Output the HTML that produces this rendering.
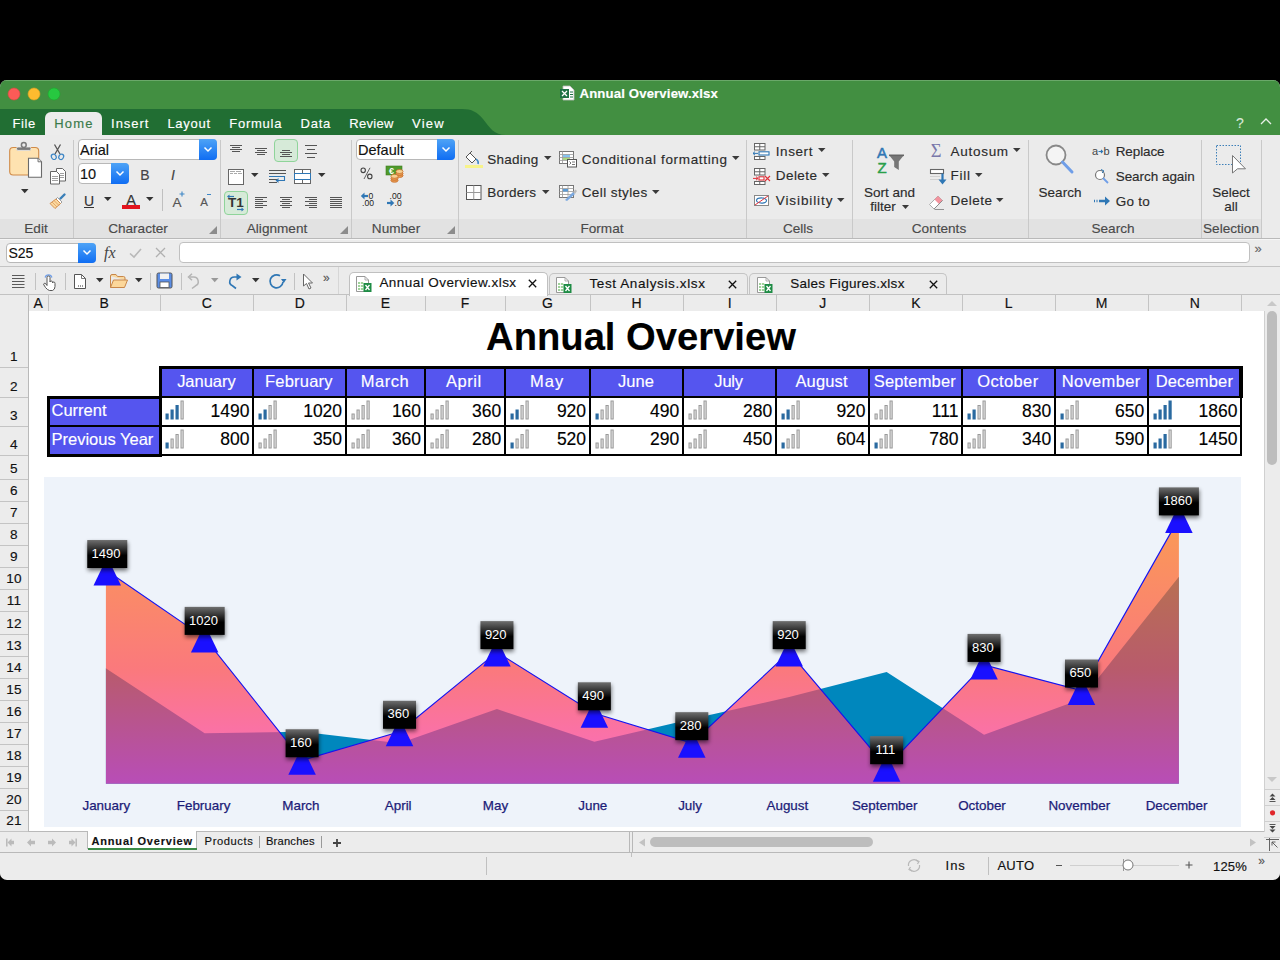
<!DOCTYPE html>
<html><head><meta charset="utf-8"><style>
html,body{margin:0;padding:0;}
body{width:1280px;height:960px;background:#000;position:relative;overflow:hidden;font-family:"Liberation Sans", sans-serif;}
.a{position:absolute;}
.t{position:absolute;white-space:nowrap;line-height:1;font-family:"Liberation Sans", sans-serif;-webkit-text-stroke:0.15px currentColor;}
svg.a{overflow:visible;}
</style></head><body>
<div class="a" style="left:0px;top:80px;width:1280px;height:800px;background:#ececec;border-radius:7px 7px 7px 7px;"></div>
<div class="a" style="left:0px;top:80px;width:1280px;height:55px;background:#428f41;border-radius:7px 7px 0 0;"></div>
<div class="a" style="left:6px;top:80px;width:1268px;height:1px;background:#6aa869;"></div>
<svg class="a" style="left:0px;top:109px;" width="510" height="26" viewBox="0 0 510 26"><path d="M0 0 H462 C472 0 477 3 483 10 C490 19 494 26 506 26 H0 Z" fill="#216e33"/></svg>
<svg class="a" style="left:7px;top:87px;" width="14" height="14" viewBox="0 0 14 14"><circle cx="7" cy="7" r="6" fill="#fc5b57" stroke="#de4640" stroke-width="0.6"/></svg>
<svg class="a" style="left:27px;top:87px;" width="14" height="14" viewBox="0 0 14 14"><circle cx="7" cy="7" r="6" fill="#fdbb2f" stroke="#df9d20" stroke-width="0.6"/></svg>
<svg class="a" style="left:47px;top:87px;" width="14" height="14" viewBox="0 0 14 14"><circle cx="7" cy="7" r="6" fill="#27c840" stroke="#1aab2b" stroke-width="0.6"/></svg>
<svg class="a" style="left:559px;top:85px;" width="16" height="16" viewBox="0 0 16 16"><path d="M4 1 H11 L15 5 V15 H4 Z" fill="#fff" stroke="#bbb" stroke-width="0.8"/><rect x="1" y="4" width="9" height="9" fill="#1d7044"/><path d="M3 6 L8 11 M8 6 L3 11" stroke="#fff" stroke-width="1.3"/><path d="M11 7 H14 M11 9.5 H14 M11 12 H14" stroke="#1d7044" stroke-width="1"/></svg>
<div class="t" style="left:579.5px;top:86.73px;font-size:13.2px;color:#fff;font-weight:bold;letter-spacing:0.133px;">Annual Overview.xlsx</div>
<div class="a" style="left:45px;top:112px;width:57px;height:24px;background:#ececec;border-radius:6px 6px 0 0;"></div>
<div class="t" style="left:12.5px;top:116.8px;font-size:13px;color:#ffffff;font-weight:normal;letter-spacing:0.585px;">File</div>
<div class="t" style="left:54.3px;top:116.8px;font-size:13px;color:#3a7a4a;font-weight:normal;letter-spacing:1.141px;">Home</div>
<div class="t" style="left:111.1px;top:116.8px;font-size:13px;color:#ffffff;font-weight:normal;letter-spacing:0.937px;">Insert</div>
<div class="t" style="left:167.4px;top:116.8px;font-size:13px;color:#ffffff;font-weight:normal;letter-spacing:0.734px;">Layout</div>
<div class="t" style="left:229.3px;top:116.8px;font-size:13px;color:#ffffff;font-weight:normal;letter-spacing:0.737px;">Formula</div>
<div class="t" style="left:300.6px;top:116.8px;font-size:13px;color:#ffffff;font-weight:normal;letter-spacing:0.714px;">Data</div>
<div class="t" style="left:349.3px;top:116.8px;font-size:13px;color:#ffffff;font-weight:normal;letter-spacing:0.296px;">Review</div>
<div class="t" style="left:412.1px;top:116.8px;font-size:13px;color:#ffffff;font-weight:normal;letter-spacing:1.186px;">View</div>
<div class="t" style="left:1236px;top:116.15px;font-size:14px;color:#d8e8d8;font-weight:normal;">?</div>
<svg class="a" style="left:1259px;top:116px;" width="14" height="10" viewBox="0 0 14 10"><path d="M2 8 L7 3 L12 8" fill="none" stroke="#e8f0e8" stroke-width="1.3"/></svg>
<div class="a" style="left:0px;top:135px;width:1280px;height:104px;background:#ebebeb;"></div>
<div class="a" style="left:0px;top:219px;width:1262px;height:19px;background:#e2e2e2;"></div>
<div class="a" style="left:0px;top:238px;width:1280px;height:1px;background:#b9b9b9;"></div>
<div class="a" style="left:0px;top:239px;width:1280px;height:1px;background:#f6f6f6;"></div>
<div class="a" style="left:73px;top:140px;width:1px;height:98px;background:#c9c9c9;"></div>
<div class="a" style="left:220px;top:140px;width:1px;height:98px;background:#c9c9c9;"></div>
<div class="a" style="left:351px;top:140px;width:1px;height:98px;background:#c9c9c9;"></div>
<div class="a" style="left:458px;top:140px;width:1px;height:98px;background:#c9c9c9;"></div>
<div class="a" style="left:746px;top:140px;width:1px;height:98px;background:#c9c9c9;"></div>
<div class="a" style="left:852px;top:140px;width:1px;height:98px;background:#c9c9c9;"></div>
<div class="a" style="left:1028px;top:140px;width:1px;height:98px;background:#c9c9c9;"></div>
<div class="a" style="left:1201px;top:140px;width:1px;height:98px;background:#c9c9c9;"></div>
<div class="a" style="left:1261px;top:140px;width:1px;height:98px;background:#c9c9c9;"></div>
<div class="t" style="left:36px;top:222.49px;font-size:13.6px;color:#4a4a4a;font-weight:normal;transform:translateX(-50%);">Edit</div>
<div class="t" style="left:138px;top:222.49px;font-size:13.6px;color:#4a4a4a;font-weight:normal;transform:translateX(-50%);">Character</div>
<div class="t" style="left:277px;top:222.49px;font-size:13.6px;color:#4a4a4a;font-weight:normal;transform:translateX(-50%);">Alignment</div>
<div class="t" style="left:396px;top:222.49px;font-size:13.6px;color:#4a4a4a;font-weight:normal;transform:translateX(-50%);">Number</div>
<div class="t" style="left:602px;top:222.49px;font-size:13.6px;color:#4a4a4a;font-weight:normal;transform:translateX(-50%);">Format</div>
<div class="t" style="left:798px;top:222.49px;font-size:13.6px;color:#4a4a4a;font-weight:normal;transform:translateX(-50%);">Cells</div>
<div class="t" style="left:939px;top:222.49px;font-size:13.6px;color:#4a4a4a;font-weight:normal;transform:translateX(-50%);">Contents</div>
<div class="t" style="left:1113px;top:222.49px;font-size:13.6px;color:#4a4a4a;font-weight:normal;transform:translateX(-50%);">Search</div>
<div class="t" style="left:1231px;top:222.49px;font-size:13.6px;color:#4a4a4a;font-weight:normal;transform:translateX(-50%);">Selection</div>
<svg class="a" style="left:209px;top:226px;" width="8" height="8" viewBox="0 0 8 8"><path d="M8 0 V8 H0 Z" fill="#8c8c8c"/></svg>
<svg class="a" style="left:340px;top:226px;" width="8" height="8" viewBox="0 0 8 8"><path d="M8 0 V8 H0 Z" fill="#8c8c8c"/></svg>
<svg class="a" style="left:447px;top:226px;" width="8" height="8" viewBox="0 0 8 8"><path d="M8 0 V8 H0 Z" fill="#8c8c8c"/></svg>
<div class="a" style="left:0px;top:266px;width:1280px;height:1px;background:#c2c2c2;"></div>
<div class="a" style="left:0px;top:267px;width:1280px;height:1px;background:#f8f8f8;"></div>
<div class="a" style="left:0px;top:294px;width:1280px;height:1px;background:#c8c8c8;"></div>
<div class="a" style="left:0px;top:295px;width:1264px;height:16px;background:#ececec;"></div>
<div class="a" style="left:0px;top:311px;width:1264px;height:1px;background:#b9b9b9;"></div>
<div class="a" style="left:29px;top:311px;width:1235px;height:521px;background:#ffffff;"></div>
<div class="a" style="left:0px;top:311px;width:29px;height:521px;background:#ececec;"></div>
<div class="a" style="left:28px;top:295px;width:1px;height:537px;background:#b9b9b9;"></div>
<div class="a" style="left:0px;top:831px;width:1280px;height:1px;background:#b9b9b9;"></div>
<div class="a" style="left:0px;top:832px;width:1264px;height:20px;background:#ececec;"></div>
<div class="a" style="left:0px;top:852px;width:1280px;height:1px;background:#b9b9b9;"></div>
<div class="a" style="left:0px;top:853px;width:1280px;height:26px;background:#ececec;border-radius:0 0 7px 7px;"></div>
<svg class="a" style="left:8px;top:140px;" width="36" height="40" viewBox="0 0 36 40">
<rect x="1.7" y="7.5" width="29" height="27.5" rx="3.5" fill="#fee2b0" stroke="#d08a48" stroke-width="1.1"/>
<rect x="8.5" y="7" width="14.5" height="3.4" rx="1.5" fill="#7a7a7a" stroke="#ececec" stroke-width="0.8"/>
<circle cx="15.8" cy="5" r="2.4" fill="none" stroke="#7a7a7a" stroke-width="1.5"/>
<path d="M20.5 18.3 H30 L33.5 21.8 V37.3 H20.5 Z" fill="#fff" stroke="#6a6a6a" stroke-width="1.1"/>
<path d="M30 18.3 V21.8 H33.5" fill="#e8e8e8" stroke="#6a6a6a" stroke-width="0.9"/>
</svg>
<svg class="a" style="left:20.65px;top:188.9px;" width="7.5" height="4.2" viewBox="0 0 7.5 4.2"><path d="M0 0 H7.5 L3.75 4.2 Z" fill="#333"/></svg>
<svg class="a" style="left:50px;top:143px;" width="15" height="18" viewBox="0 0 15 18"><path d="M4.5 1.5 L10 11 M10.5 1.5 L5 11" stroke="#555" stroke-width="1.3" fill="none"/>
<ellipse cx="3.8" cy="13.8" rx="2.3" ry="2.8" transform="rotate(-30 3.8 13.8)" fill="none" stroke="#3d86c6" stroke-width="1.2"/><ellipse cx="11.2" cy="13.8" rx="2.3" ry="2.8" transform="rotate(30 11.2 13.8)" fill="none" stroke="#3d86c6" stroke-width="1.2"/></svg>
<svg class="a" style="left:49px;top:167px;" width="18" height="18" viewBox="0 0 18 18"><path d="M7.5 1.5 H13.5 L16.5 4.5 V14 H7.5 Z" fill="#fff" stroke="#666" stroke-width="1"/>
<path d="M1.5 4.5 H7.5 L10.5 7.5 V17 H1.5 Z" fill="#fff" stroke="#666" stroke-width="1"/>
<path d="M3 9.5 H9 M3 11.5 H9 M3 13.5 H9 M11 6.5 H15 M11 8.5 H15 M11 10.5 H15" stroke="#888" stroke-width="0.8"/></svg>
<svg class="a" style="left:49px;top:192px;" width="18" height="18" viewBox="0 0 18 18"><path d="M11.5 6.5 L15.5 2.5" stroke="#3a7fb8" stroke-width="2.4" stroke-linecap="round"/>
<path d="M8.5 5.5 L13 10 L11.5 11.5 L7 7 Z" fill="#fff" stroke="#888" stroke-width="0.8"/>
<path d="M7 7 L11.5 11.5 L6 16.5 L1 11.5 Z" fill="#fcd9a0" stroke="#d08a48" stroke-width="0.9"/>
<path d="M3 10 L8 15 M5 8.5 L10 13.5" stroke="#d08a48" stroke-width="0.6"/></svg>
<div class="a" style="left:77.5px;top:139px;width:139.5px;height:21px;background:#fff;border:1px solid #b8b8b8;border-radius:4px;box-sizing:border-box;"></div>
<div class="a" style="left:199px;top:139px;width:18px;height:21px;background:linear-gradient(#4ea3f6,#0f6df3);border-radius:0 4px 4px 0;"></div>
<svg class="a" style="left:203.0px;top:146.0px;" width="10" height="7" viewBox="0 0 10 7"><path d="M1.5 1.5 L5 5 L8.5 1.5" fill="none" stroke="#fff" stroke-width="1.5"/></svg>
<div class="t" style="left:80px;top:143.23px;font-size:14.5px;color:#111;font-weight:normal;">Arial</div>
<div class="a" style="left:77.5px;top:163px;width:51.5px;height:21px;background:#fff;border:1px solid #b8b8b8;border-radius:4px;box-sizing:border-box;"></div>
<div class="a" style="left:111px;top:163px;width:18px;height:21px;background:linear-gradient(#4ea3f6,#0f6df3);border-radius:0 4px 4px 0;"></div>
<svg class="a" style="left:115.0px;top:170.0px;" width="10" height="7" viewBox="0 0 10 7"><path d="M1.5 1.5 L5 5 L8.5 1.5" fill="none" stroke="#fff" stroke-width="1.5"/></svg>
<div class="t" style="left:80px;top:167.03px;font-size:14.5px;color:#111;font-weight:normal;">10</div>
<div class="t" style="left:145px;top:168.15px;font-size:14px;color:#444;font-weight:normal;transform:translateX(-50%);">B</div>
<div class="t" style="left:173px;top:168.15px;font-size:14px;color:#444;font-weight:normal;transform:translateX(-50%);"><i>I</i></div>
<div class="t" style="left:89px;top:194.15px;font-size:14px;color:#333;font-weight:normal;transform:translateX(-50%);">U</div>
<div class="a" style="left:84px;top:207px;width:10px;height:1.2px;background:#333;"></div>
<svg class="a" style="left:103.75px;top:197.0px;" width="7.5" height="4" viewBox="0 0 7.5 4"><path d="M0 0 H7.5 L3.75 4 Z" fill="#333"/></svg>
<div class="t" style="left:131px;top:192.73px;font-size:14.5px;color:#333;font-weight:normal;transform:translateX(-50%);">A</div>
<div class="a" style="left:122px;top:205px;width:18px;height:4px;background:#e3141d;"></div>
<svg class="a" style="left:145.75px;top:197.0px;" width="7.5" height="4" viewBox="0 0 7.5 4"><path d="M0 0 H7.5 L3.75 4 Z" fill="#333"/></svg>
<div class="a" style="left:161.5px;top:188.5px;width:1px;height:22px;background:#c0c0c0;"></div>
<div class="t" style="left:177px;top:195.57px;font-size:13.5px;color:#555;font-weight:normal;transform:translateX(-50%);">A</div>
<svg class="a" style="left:179px;top:191px;" width="6" height="6" viewBox="0 0 6 6"><path d="M3 0.5 V5.5 M0.5 3 H5.5" stroke="#3d86c6" stroke-width="1.1"/></svg>
<div class="t" style="left:204px;top:197.27px;font-size:11.5px;color:#555;font-weight:normal;transform:translateX(-50%);">A</div>
<div class="a" style="left:207px;top:193.5px;width:4px;height:1.2px;background:#3d86c6;"></div>
<div class="a" style="left:274px;top:139px;width:24px;height:23px;background:#d6ead8;border:1px solid #8fd49a;border-radius:4px;box-sizing:border-box;"></div>
<div class="a" style="left:224px;top:191px;width:24px;height:24px;background:#d6ead8;border:1px solid #8fd49a;border-radius:4px;box-sizing:border-box;"></div>
<svg class="a" style="left:220px;top:135px;" width="132" height="84" viewBox="0 0 132 84"><rect x="10" y="10" width="12" height="1" fill="#555"/><rect x="12" y="12" width="8" height="1" fill="#555"/><rect x="10" y="14" width="12" height="1" fill="#555"/><rect x="12" y="16" width="8" height="1" fill="#555"/><rect x="35" y="13" width="12" height="1" fill="#555"/><rect x="37" y="15" width="8" height="1" fill="#555"/><rect x="35" y="17" width="12" height="1" fill="#555"/><rect x="37" y="19" width="8" height="1" fill="#555"/><rect x="62" y="15" width="8" height="1" fill="#555"/><rect x="60" y="17" width="12" height="1" fill="#555"/><rect x="62" y="19" width="8" height="1" fill="#555"/><rect x="60" y="21" width="12" height="1" fill="#555"/><rect x="85" y="10" width="12" height="1" fill="#555"/><rect x="87" y="14" width="8" height="1" fill="#555"/><rect x="85" y="18" width="12" height="1" fill="#555"/><rect x="87" y="22" width="8" height="1" fill="#555"/><rect x="35" y="62" width="12" height="1" fill="#555"/><rect x="35" y="64" width="8" height="1" fill="#555"/><rect x="35" y="66" width="12" height="1" fill="#555"/><rect x="35" y="68" width="8" height="1" fill="#555"/><rect x="35" y="70" width="12" height="1" fill="#555"/><rect x="35" y="72" width="8" height="1" fill="#555"/><rect x="60" y="62" width="12" height="1" fill="#555"/><rect x="62" y="64" width="8" height="1" fill="#555"/><rect x="60" y="66" width="12" height="1" fill="#555"/><rect x="62" y="68" width="8" height="1" fill="#555"/><rect x="60" y="70" width="12" height="1" fill="#555"/><rect x="62" y="72" width="8" height="1" fill="#555"/><rect x="85" y="62" width="12" height="1" fill="#555"/><rect x="89" y="64" width="8" height="1" fill="#555"/><rect x="85" y="66" width="12" height="1" fill="#555"/><rect x="89" y="68" width="8" height="1" fill="#555"/><rect x="85" y="70" width="12" height="1" fill="#555"/><rect x="89" y="72" width="8" height="1" fill="#555"/><rect x="110" y="62" width="12" height="1" fill="#555"/><rect x="110" y="64" width="12" height="1" fill="#555"/><rect x="110" y="66" width="12" height="1" fill="#555"/><rect x="110" y="68" width="12" height="1" fill="#555"/><rect x="110" y="70" width="12" height="1" fill="#555"/><rect x="110" y="72" width="12" height="1" fill="#555"/><rect x="8.5" y="34.5" width="15" height="15" fill="#fff" stroke="#666" stroke-width="1"/><rect x="10" y="36" width="5" height="1" fill="#aaa"/><rect x="16" y="36" width="5" height="1" fill="#aaa"/><rect x="10" y="38" width="3" height="1" fill="#aaa"/><rect x="14" y="38" width="3" height="1" fill="#aaa"/><rect x="18" y="38" width="4" height="1" fill="#aaa"/><rect x="49" y="35" width="17" height="1" fill="#555"/><rect x="49" y="38" width="17" height="1" fill="#555"/><rect x="49" y="44" width="8" height="1" fill="#555"/><rect x="49" y="47" width="8" height="1" fill="#555"/><path d="M49 41.5 H64.5 V45.5 H57" fill="none" stroke="#2f77b5" stroke-width="1.1"/><path d="M55.5 45.5 L58.5 43 V48 Z" fill="#2f77b5"/><rect x="74.5" y="34.5" width="16" height="14" fill="#fff" stroke="#666" stroke-width="1"/><path d="M82.5 34.5 V38.5 M82.5 44.5 V48.5" stroke="#666" stroke-width="1"/><rect x="74.5" y="38.5" width="16" height="6" fill="#fff" stroke="#2f77b5" stroke-width="1"/><text x="16" y="72" font-size="13.5" font-weight="bold" fill="#333" text-anchor="middle" font-family="Liberation Sans">T1</text><path d="M8 61.5 H14" stroke="#2f77b5" stroke-width="1.2"/><path d="M7 61.5 L9.5 59.5 V63.5 Z" fill="#2f77b5"/><path d="M17 74.5 H23" stroke="#2f77b5" stroke-width="1.2"/><path d="M24 74.5 L21.5 72.5 V76.5 Z" fill="#2f77b5"/></svg>
<svg class="a" style="left:250.75px;top:173.0px;" width="7.5" height="4" viewBox="0 0 7.5 4"><path d="M0 0 H7.5 L3.75 4 Z" fill="#333"/></svg>
<svg class="a" style="left:317.75px;top:173.0px;" width="7.5" height="4" viewBox="0 0 7.5 4"><path d="M0 0 H7.5 L3.75 4 Z" fill="#333"/></svg>
<div class="a" style="left:355.6px;top:139px;width:99.39999999999998px;height:21px;background:#fff;border:1px solid #b8b8b8;border-radius:4px;box-sizing:border-box;"></div>
<div class="a" style="left:437px;top:139px;width:18px;height:21px;background:linear-gradient(#4ea3f6,#0f6df3);border-radius:0 4px 4px 0;"></div>
<svg class="a" style="left:441.0px;top:146.0px;" width="10" height="7" viewBox="0 0 10 7"><path d="M1.5 1.5 L5 5 L8.5 1.5" fill="none" stroke="#fff" stroke-width="1.5"/></svg>
<div class="t" style="left:358px;top:143.23px;font-size:14.5px;color:#111;font-weight:normal;">Default</div>
<svg class="a" style="left:360px;top:167px;" width="14" height="13" viewBox="0 0 14 13"><ellipse cx="3.2" cy="3.3" rx="2.2" ry="2.3" fill="none" stroke="#444" stroke-width="1.1"/><ellipse cx="9.8" cy="9.4" rx="2.2" ry="2.3" fill="none" stroke="#444" stroke-width="1.1"/><path d="M10 0.8 L4 12" stroke="#555" stroke-width="0.9"/></svg>
<svg class="a" style="left:385px;top:165px;" width="20" height="18" viewBox="0 0 20 18"><rect x="1" y="1" width="16" height="9" fill="#4f9a2c" stroke="#3c7d20" stroke-width="0.6"/><text x="4" y="8.8" font-size="9" font-weight="bold" fill="#fff" font-family="Liberation Sans">&#8364;</text>
<g stroke="#c46a28" stroke-width="0.7"><ellipse cx="14.5" cy="10.5" rx="3.6" ry="2" fill="#e89a50"/><ellipse cx="14.5" cy="8.5" rx="3.6" ry="2" fill="#e89a50"/><ellipse cx="14.5" cy="6.5" rx="3.6" ry="2" fill="#f6d090"/>
<ellipse cx="9.5" cy="15.3" rx="3.6" ry="2" fill="#e89a50"/><ellipse cx="9.5" cy="13.3" rx="3.6" ry="2" fill="#e89a50"/><ellipse cx="9.5" cy="11.3" rx="3.6" ry="2" fill="#f6d090"/></g></svg>
<svg class="a" style="left:357px;top:190px;" width="22" height="20" viewBox="0 0 22 20"><path d="M11 6 H5.5" stroke="#2f77b5" stroke-width="2.2"/><path d="M3.8 6 L7.5 2.5 V9.5 Z" fill="#2f77b5"/>
<text x="11.5" y="9.3" font-size="8.6" fill="#222" font-family="Liberation Sans">0</text><text x="5" y="16.3" font-size="8.6" fill="#222" font-family="Liberation Sans">.00</text></svg>
<svg class="a" style="left:385px;top:190px;" width="22" height="20" viewBox="0 0 22 20"><text x="4.5" y="9.3" font-size="8.6" fill="#222" font-family="Liberation Sans">.00</text>
<path d="M2 13 H7.5" stroke="#2f77b5" stroke-width="2.2"/><path d="M9.3 13 L5.5 9.5 V16.5 Z" fill="#2f77b5"/><text x="9.5" y="16.3" font-size="8.6" fill="#222" font-family="Liberation Sans">.0</text></svg>
<svg class="a" style="left:464px;top:150px;" width="20" height="18" viewBox="0 0 20 18"><path d="M6 3 L12 9 L8 13 L2 7 Z" fill="#fff" stroke="#555" stroke-width="1"/><path d="M6 3 L8 1" stroke="#555"/><path d="M12 9 Q15 11 14 14" fill="none" stroke="#3d86c6" stroke-width="1.5"/>
<rect x="1" y="15" width="18" height="3" fill="#f7f38a"/></svg>
<div class="t" style="left:487.3px;top:153.17px;font-size:13.5px;color:#2b2b2b;font-weight:normal;letter-spacing:0.243px;">Shading</div>
<svg class="a" style="left:543.75px;top:156.0px;" width="7.5" height="4" viewBox="0 0 7.5 4"><path d="M0 0 H7.5 L3.75 4 Z" fill="#3a3a3a"/></svg>
<svg class="a" style="left:559px;top:151px;" width="19" height="17" viewBox="0 0 19 17"><rect x="0.5" y="0.5" width="14" height="12" fill="#fff" stroke="#777"/><rect x="4" y="3.5" width="7" height="2.5" fill="#86c4f0"/><rect x="4" y="6.5" width="7" height="2.5" fill="#a8d880"/>
<path d="M0.5 3.5 H14.5 M0.5 6.5 H14.5 M0.5 9.5 H14.5 M3.5 0.5 V12.5" stroke="#999" stroke-width="0.8"/>
<rect x="8.5" y="8.5" width="9" height="7.5" fill="#fff" stroke="#555"/><path d="M10.5 10.5 L12 12 L10.5 13.5 M13 13.5 H16 M13 11 H16" stroke="#555" stroke-width="0.8" fill="none"/></svg>
<div class="t" style="left:581.7px;top:153.17px;font-size:13.5px;color:#2b2b2b;font-weight:normal;letter-spacing:0.666px;">Conditional formatting</div>
<svg class="a" style="left:731.75px;top:156.0px;" width="7.5" height="4" viewBox="0 0 7.5 4"><path d="M0 0 H7.5 L3.75 4 Z" fill="#3a3a3a"/></svg>
<svg class="a" style="left:465.5px;top:185px;" width="17" height="17" viewBox="0 0 17 17"><rect x="0.5" y="0.5" width="14.5" height="14" fill="#fff" stroke="#555"/><path d="M7.75 0.5 V14.5 M0.5 7.5 H15" stroke="#999"/></svg>
<div class="t" style="left:487.3px;top:186.37px;font-size:13.5px;color:#2b2b2b;font-weight:normal;letter-spacing:0.222px;">Borders</div>
<svg class="a" style="left:541.75px;top:190.0px;" width="7.5" height="4" viewBox="0 0 7.5 4"><path d="M0 0 H7.5 L3.75 4 Z" fill="#3a3a3a"/></svg>
<svg class="a" style="left:559px;top:185px;" width="19" height="17" viewBox="0 0 19 17"><rect x="0.5" y="0.5" width="14" height="12" fill="#fff" stroke="#777"/><path d="M0.5 3.5 H14.5 M0.5 6.5 H14.5 M0.5 9.5 H14.5 M3.5 0.5 V12.5 M9 0.5 V12.5" stroke="#999" stroke-width="0.8"/>
<rect x="4" y="4" width="5" height="2.5" fill="#5b9bd5"/><path d="M6 15 L14 7 L16 9 L8 16 Z" fill="#7aa8e0"/><path d="M14 7 L16.5 4.5 L18 6 L16 9" fill="#bbb"/></svg>
<div class="t" style="left:581.7px;top:186.37px;font-size:13.5px;color:#2b2b2b;font-weight:normal;letter-spacing:0.408px;">Cell styles</div>
<svg class="a" style="left:652.25px;top:190.0px;" width="7.5" height="4" viewBox="0 0 7.5 4"><path d="M0 0 H7.5 L3.75 4 Z" fill="#3a3a3a"/></svg>
<svg class="a" style="left:753px;top:143px;" width="18" height="18" viewBox="0 0 18 18"><rect x="1.5" y="0.5" width="10.5" height="6.5" fill="#fff" stroke="#666"/><path d="M6.75 0.5 V7 M1.5 3.75 H12" stroke="#666"/><rect x="1.5" y="13.5" width="10.5" height="3" fill="#fff" stroke="#666"/><path d="M6.75 13.5 V16.5" stroke="#666"/><rect x="6" y="8.8" width="10" height="3.2" fill="#fff" stroke="#2f77b5" stroke-width="1.1"/><path d="M0 10.4 H5 M0 10.4 L2 8.6 M0 10.4 L2 12.2" stroke="#2f77b5" stroke-width="1" fill="none"/></svg>
<div class="t" style="left:775.8000000000001px;top:144.57px;font-size:13.5px;color:#2b2b2b;font-weight:normal;letter-spacing:0.568px;">Insert</div>
<svg class="a" style="left:817.75px;top:148.0px;" width="7.5" height="4" viewBox="0 0 7.5 4"><path d="M0 0 H7.5 L3.75 4 Z" fill="#3a3a3a"/></svg>
<svg class="a" style="left:753px;top:168px;" width="18" height="18" viewBox="0 0 18 18"><rect x="1.5" y="0.5" width="10.5" height="6.5" fill="#fff" stroke="#666"/><path d="M6.75 0.5 V7 M1.5 3.75 H12" stroke="#666"/><rect x="1.5" y="13.5" width="10.5" height="3" fill="#fff" stroke="#666"/><path d="M6.75 13.5 V16.5" stroke="#666"/><rect x="6" y="8.8" width="5" height="3.2" fill="#fff" stroke="#e0313a" stroke-width="1.1"/><path d="M0 10.4 H5 M5 10.4 L3 8.6 M5 10.4 L3 12.2" stroke="#e0313a" stroke-width="1" fill="none"/><path d="M12 8 L17 13 M17 8 L12 13" stroke="#e0313a" stroke-width="1.1"/></svg>
<div class="t" style="left:775.8px;top:169.37px;font-size:13.5px;color:#2b2b2b;font-weight:normal;letter-spacing:0.415px;">Delete</div>
<svg class="a" style="left:821.75px;top:172.8px;" width="7.5" height="4" viewBox="0 0 7.5 4"><path d="M0 0 H7.5 L3.75 4 Z" fill="#3a3a3a"/></svg>
<svg class="a" style="left:753px;top:194px;" width="18" height="14" viewBox="0 0 18 14"><rect x="1.5" y="1.5" width="14" height="10" fill="#fff" stroke="#888"/><ellipse cx="8.5" cy="6.5" rx="5" ry="2.6" fill="none" stroke="#2f77b5" stroke-width="1.1"/><path d="M2 11 L15 2" stroke="#e0313a" stroke-width="1"/></svg>
<div class="t" style="left:775.8000000000001px;top:194.17px;font-size:13.5px;color:#2b2b2b;font-weight:normal;letter-spacing:0.898px;">Visibility</div>
<svg class="a" style="left:837.25px;top:197.6px;" width="7.5" height="4" viewBox="0 0 7.5 4"><path d="M0 0 H7.5 L3.75 4 Z" fill="#3a3a3a"/></svg>
<svg class="a" style="left:873px;top:143px;" width="34" height="34" viewBox="0 0 34 34"><text x="9" y="15.3" font-size="15" fill="#2f77b5" stroke="#2f77b5" stroke-width="0.5" text-anchor="middle" font-family="Liberation Sans">A</text>
<text x="9" y="30.3" font-size="15" fill="#2aa04a" stroke="#2aa04a" stroke-width="0.5" text-anchor="middle" font-family="Liberation Sans">Z</text>
<path d="M16 12 H31 L25.8 18.5 V27 L21.2 24 V18.5 Z" fill="#777"/><path d="M16 12.3 H31" stroke="#666" stroke-width="1.6"/></svg>
<div class="t" style="left:889.5px;top:185.77px;font-size:13.5px;color:#2b2b2b;font-weight:normal;transform:translateX(-50%);">Sort and</div>
<div class="t" style="left:883px;top:200.07px;font-size:13.5px;color:#2b2b2b;font-weight:normal;transform:translateX(-50%);">filter</div>
<svg class="a" style="left:902.0px;top:205.0px;" width="7" height="4" viewBox="0 0 7 4"><path d="M0 0 H7 L3.5 4 Z" fill="#3a3a3a"/></svg>
<svg class="a" style="left:928px;top:141px;" width="18" height="18" viewBox="0 0 18 18"><text x="2.8" y="15.8" font-size="18.5" fill="#7a78aa" font-family="Liberation Serif">&#931;</text></svg>
<div class="t" style="left:950.5px;top:144.57px;font-size:13.5px;color:#2b2b2b;font-weight:normal;letter-spacing:0.721px;">Autosum</div>
<svg class="a" style="left:1013.25px;top:148.0px;" width="7.5" height="4" viewBox="0 0 7.5 4"><path d="M0 0 H7.5 L3.75 4 Z" fill="#3a3a3a"/></svg>
<svg class="a" style="left:929px;top:168px;" width="18" height="18" viewBox="0 0 18 18"><rect x="1.5" y="1.5" width="13" height="4" fill="#fff" stroke="#666" stroke-width="1.1"/><path d="M1 8.5 H11 M1 11.5 H11" stroke="#d0d0d0" stroke-width="1"/><path d="M13.5 5.5 V13" stroke="#2f77b5" stroke-width="2.2"/><path d="M9.5 11.5 L13.5 16.5 L17.5 11.5 Z" fill="#2f77b5"/></svg>
<div class="t" style="left:950.5px;top:169.37px;font-size:13.5px;color:#2b2b2b;font-weight:normal;letter-spacing:0.784px;">Fill</div>
<svg class="a" style="left:975.25px;top:172.8px;" width="7.5" height="4" viewBox="0 0 7.5 4"><path d="M0 0 H7.5 L3.75 4 Z" fill="#3a3a3a"/></svg>
<svg class="a" style="left:928px;top:194px;" width="18" height="16" viewBox="0 0 18 16"><path d="M1.5 10.5 L10 2 L14.5 6.5 L6 15 Z" fill="#fff" stroke="#999" stroke-width="0.8"/><path d="M6.5 5.5 L10 2 L14.5 6.5 L11 10 Z" fill="#f4939e"/><path d="M6 15 L14.5 6.5 M6.5 15.5 H16" stroke="#888" stroke-width="0.9"/></svg>
<div class="t" style="left:950.5px;top:194.17px;font-size:13.5px;color:#2b2b2b;font-weight:normal;letter-spacing:0.475px;">Delete</div>
<svg class="a" style="left:996.25px;top:197.6px;" width="7.5" height="4" viewBox="0 0 7.5 4"><path d="M0 0 H7.5 L3.75 4 Z" fill="#3a3a3a"/></svg>
<svg class="a" style="left:1042px;top:142px;" width="34" height="34" viewBox="0 0 34 34"><circle cx="14" cy="13" r="9.5" fill="#f4f4f4" stroke="#888" stroke-width="1.8"/><path d="M20.5 20 L30 30" stroke="#6f9ee8" stroke-width="3" stroke-linecap="round"/></svg>
<div class="t" style="left:1060px;top:185.77px;font-size:13.5px;color:#2b2b2b;font-weight:normal;transform:translateX(-50%);">Search</div>
<svg class="a" style="left:1091px;top:144px;" width="20" height="14" viewBox="0 0 20 14"><text x="1" y="11" font-size="11" fill="#444" font-family="Liberation Sans">a</text><text x="12.5" y="11" font-size="11" fill="#444" font-family="Liberation Sans">b</text><path d="M7.5 7.5 H11.5 M10 6 L11.5 7.5 L10 9" stroke="#2f77b5" stroke-width="1.1" fill="none"/></svg>
<div class="t" style="left:1115.7px;top:144.57px;font-size:13.5px;color:#2b2b2b;font-weight:normal;letter-spacing:-0.105px;">Replace</div>
<svg class="a" style="left:1093px;top:168px;" width="18" height="18" viewBox="0 0 18 18"><circle cx="7" cy="7" r="4.5" fill="#fff" stroke="#777" stroke-width="1.2"/><path d="M10 10 L15 15" stroke="#6f9ee8" stroke-width="1.8"/><path d="M8 1.5 L11 3 L9 5" stroke="#2f77b5" stroke-width="1" fill="none"/></svg>
<div class="t" style="left:1115.7px;top:169.87px;font-size:13.5px;color:#2b2b2b;font-weight:normal;letter-spacing:-0.041px;">Search again</div>
<svg class="a" style="left:1093px;top:195px;" width="20" height="12" viewBox="0 0 20 12"><path d="M1 6 H2 M3.5 6 H4.5 M6 6 H13" stroke="#2f77b5" stroke-width="2.4"/><path d="M12 1.5 L17 6 L12 10.5 Z" fill="#2f77b5"/></svg>
<div class="t" style="left:1115.7px;top:194.57px;font-size:13.5px;color:#2b2b2b;font-weight:normal;letter-spacing:0.271px;">Go to</div>
<svg class="a" style="left:1214px;top:143px;" width="34" height="32" viewBox="0 0 34 32"><rect x="2.5" y="2.5" width="24" height="19" fill="none" stroke="#3d7fb8" stroke-width="1" stroke-dasharray="1.5,1.5"/><path d="M18.5 12.5 V30 L23.5 25.8 H31.5 Z" fill="#fff" stroke="#777" stroke-width="1" stroke-linejoin="miter"/></svg>
<div class="t" style="left:1231px;top:185.77px;font-size:13.5px;color:#2b2b2b;font-weight:normal;transform:translateX(-50%);">Select</div>
<div class="t" style="left:1231px;top:199.87px;font-size:13.5px;color:#2b2b2b;font-weight:normal;transform:translateX(-50%);">all</div>
<div class="a" style="left:6px;top:242.5px;width:90px;height:20.0px;background:#fff;border:1px solid #b8b8b8;border-radius:4px;box-sizing:border-box;"></div>
<div class="a" style="left:78px;top:242.5px;width:18px;height:20.0px;background:linear-gradient(#4ea3f6,#0f6df3);border-radius:0 4px 4px 0;"></div>
<svg class="a" style="left:82.0px;top:249.0px;" width="10" height="7" viewBox="0 0 10 7"><path d="M1.5 1.5 L5 5 L8.5 1.5" fill="none" stroke="#fff" stroke-width="1.5"/></svg>
<div class="t" style="left:8.5px;top:246.15px;font-size:14px;color:#111;font-weight:normal;">S25</div>
<svg class="a" style="left:103px;top:243px;" width="18" height="19" viewBox="0 0 18 19"><text x="1" y="15" font-size="16" font-style="italic" fill="#444" font-family="Liberation Serif">fx</text></svg>
<svg class="a" style="left:128px;top:246px;" width="16" height="14" viewBox="0 0 16 14"><path d="M2 7.5 L6 11 L13 3" fill="none" stroke="#b8b8b8" stroke-width="1.6"/></svg>
<svg class="a" style="left:154px;top:246px;" width="13" height="13" viewBox="0 0 13 13"><path d="M2 2 L11 11 M11 2 L2 11" stroke="#b0b0b0" stroke-width="1.3"/></svg>
<div class="a" style="left:178.5px;top:242px;width:1071.5px;height:21px;background:#fff;border:1px solid #c0c0c0;border-radius:4px;box-sizing:border-box;"></div>
<div class="t" style="left:1258px;top:242.0px;font-size:13px;color:#666;font-weight:normal;transform:translateX(-50%);">&#187;</div>
<div class="a" style="left:48px;top:295px;width:1px;height:16px;background:#c4c4c4;"></div>
<div class="t" style="left:38.25px;top:295.55px;font-size:14px;color:#111;font-weight:normal;transform:translateX(-50%);">A</div>
<div class="a" style="left:160px;top:295px;width:1px;height:16px;background:#c4c4c4;"></div>
<div class="t" style="left:104.05000000000001px;top:295.55px;font-size:14px;color:#111;font-weight:normal;transform:translateX(-50%);">B</div>
<div class="a" style="left:253px;top:295px;width:1px;height:16px;background:#c4c4c4;"></div>
<div class="t" style="left:206.7px;top:295.55px;font-size:14px;color:#111;font-weight:normal;transform:translateX(-50%);">C</div>
<div class="a" style="left:346px;top:295px;width:1px;height:16px;background:#c4c4c4;"></div>
<div class="t" style="left:299.7px;top:295.55px;font-size:14px;color:#111;font-weight:normal;transform:translateX(-50%);">D</div>
<div class="a" style="left:425px;top:295px;width:1px;height:16px;background:#c4c4c4;"></div>
<div class="t" style="left:385.5px;top:295.55px;font-size:14px;color:#111;font-weight:normal;transform:translateX(-50%);">E</div>
<div class="a" style="left:505px;top:295px;width:1px;height:16px;background:#c4c4c4;"></div>
<div class="t" style="left:465.05px;top:295.55px;font-size:14px;color:#111;font-weight:normal;transform:translateX(-50%);">F</div>
<div class="a" style="left:590px;top:295px;width:1px;height:16px;background:#c4c4c4;"></div>
<div class="t" style="left:547.55px;top:295.55px;font-size:14px;color:#111;font-weight:normal;transform:translateX(-50%);">G</div>
<div class="a" style="left:683px;top:295px;width:1px;height:16px;background:#c4c4c4;"></div>
<div class="t" style="left:636.55px;top:295.55px;font-size:14px;color:#111;font-weight:normal;transform:translateX(-50%);">H</div>
<div class="a" style="left:776px;top:295px;width:1px;height:16px;background:#c4c4c4;"></div>
<div class="t" style="left:729.6500000000001px;top:295.55px;font-size:14px;color:#111;font-weight:normal;transform:translateX(-50%);">I</div>
<div class="a" style="left:869px;top:295px;width:1px;height:16px;background:#c4c4c4;"></div>
<div class="t" style="left:822.85px;top:295.55px;font-size:14px;color:#111;font-weight:normal;transform:translateX(-50%);">J</div>
<div class="a" style="left:962px;top:295px;width:1px;height:16px;background:#c4c4c4;"></div>
<div class="t" style="left:915.9000000000001px;top:295.55px;font-size:14px;color:#111;font-weight:normal;transform:translateX(-50%);">K</div>
<div class="a" style="left:1055px;top:295px;width:1px;height:16px;background:#c4c4c4;"></div>
<div class="t" style="left:1008.75px;top:295.55px;font-size:14px;color:#111;font-weight:normal;transform:translateX(-50%);">L</div>
<div class="a" style="left:1148px;top:295px;width:1px;height:16px;background:#c4c4c4;"></div>
<div class="t" style="left:1101.7px;top:295.55px;font-size:14px;color:#111;font-weight:normal;transform:translateX(-50%);">M</div>
<div class="a" style="left:1241px;top:295px;width:1px;height:16px;background:#c4c4c4;"></div>
<div class="t" style="left:1194.75px;top:295.55px;font-size:14px;color:#111;font-weight:normal;transform:translateX(-50%);">N</div>
<div class="a" style="left:1264px;top:295px;width:16px;height:16px;background:#ececec;"></div>
<div class="a" style="left:0px;top:367px;width:28px;height:1px;background:#c4c4c4;"></div>
<div class="t" style="left:13.9px;top:350.29px;font-size:13.6px;color:#111;font-weight:normal;transform:translateX(-50%);">1</div>
<div class="a" style="left:0px;top:397px;width:28px;height:1px;background:#c4c4c4;"></div>
<div class="t" style="left:13.9px;top:380.29px;font-size:13.6px;color:#111;font-weight:normal;transform:translateX(-50%);">2</div>
<div class="a" style="left:0px;top:426px;width:28px;height:1px;background:#c4c4c4;"></div>
<div class="t" style="left:13.9px;top:409.29px;font-size:13.6px;color:#111;font-weight:normal;transform:translateX(-50%);">3</div>
<div class="a" style="left:0px;top:455px;width:28px;height:1px;background:#c4c4c4;"></div>
<div class="t" style="left:13.9px;top:438.29px;font-size:13.6px;color:#111;font-weight:normal;transform:translateX(-50%);">4</div>
<div class="a" style="left:0px;top:479px;width:28px;height:1px;background:#c4c4c4;"></div>
<div class="t" style="left:13.9px;top:462.29px;font-size:13.6px;color:#111;font-weight:normal;transform:translateX(-50%);">5</div>
<div class="a" style="left:0px;top:501px;width:28px;height:1px;background:#c4c4c4;"></div>
<div class="t" style="left:13.9px;top:484.29px;font-size:13.6px;color:#111;font-weight:normal;transform:translateX(-50%);">6</div>
<div class="a" style="left:0px;top:523px;width:28px;height:1px;background:#c4c4c4;"></div>
<div class="t" style="left:13.9px;top:506.29px;font-size:13.6px;color:#111;font-weight:normal;transform:translateX(-50%);">7</div>
<div class="a" style="left:0px;top:545px;width:28px;height:1px;background:#c4c4c4;"></div>
<div class="t" style="left:13.9px;top:528.29px;font-size:13.6px;color:#111;font-weight:normal;transform:translateX(-50%);">8</div>
<div class="a" style="left:0px;top:567px;width:28px;height:1px;background:#c4c4c4;"></div>
<div class="t" style="left:13.9px;top:550.29px;font-size:13.6px;color:#111;font-weight:normal;transform:translateX(-50%);">9</div>
<div class="a" style="left:0px;top:589px;width:28px;height:1px;background:#c4c4c4;"></div>
<div class="t" style="left:13.9px;top:572.29px;font-size:13.6px;color:#111;font-weight:normal;transform:translateX(-50%);">10</div>
<div class="a" style="left:0px;top:611px;width:28px;height:1px;background:#c4c4c4;"></div>
<div class="t" style="left:13.9px;top:594.29px;font-size:13.6px;color:#111;font-weight:normal;transform:translateX(-50%);">11</div>
<div class="a" style="left:0px;top:634px;width:28px;height:1px;background:#c4c4c4;"></div>
<div class="t" style="left:13.9px;top:617.29px;font-size:13.6px;color:#111;font-weight:normal;transform:translateX(-50%);">12</div>
<div class="a" style="left:0px;top:656px;width:28px;height:1px;background:#c4c4c4;"></div>
<div class="t" style="left:13.9px;top:639.29px;font-size:13.6px;color:#111;font-weight:normal;transform:translateX(-50%);">13</div>
<div class="a" style="left:0px;top:678px;width:28px;height:1px;background:#c4c4c4;"></div>
<div class="t" style="left:13.9px;top:661.29px;font-size:13.6px;color:#111;font-weight:normal;transform:translateX(-50%);">14</div>
<div class="a" style="left:0px;top:700px;width:28px;height:1px;background:#c4c4c4;"></div>
<div class="t" style="left:13.9px;top:683.29px;font-size:13.6px;color:#111;font-weight:normal;transform:translateX(-50%);">15</div>
<div class="a" style="left:0px;top:722px;width:28px;height:1px;background:#c4c4c4;"></div>
<div class="t" style="left:13.9px;top:705.29px;font-size:13.6px;color:#111;font-weight:normal;transform:translateX(-50%);">16</div>
<div class="a" style="left:0px;top:744px;width:28px;height:1px;background:#c4c4c4;"></div>
<div class="t" style="left:13.9px;top:727.29px;font-size:13.6px;color:#111;font-weight:normal;transform:translateX(-50%);">17</div>
<div class="a" style="left:0px;top:766px;width:28px;height:1px;background:#c4c4c4;"></div>
<div class="t" style="left:13.9px;top:749.29px;font-size:13.6px;color:#111;font-weight:normal;transform:translateX(-50%);">18</div>
<div class="a" style="left:0px;top:788px;width:28px;height:1px;background:#c4c4c4;"></div>
<div class="t" style="left:13.9px;top:771.29px;font-size:13.6px;color:#111;font-weight:normal;transform:translateX(-50%);">19</div>
<div class="a" style="left:0px;top:810px;width:28px;height:1px;background:#c4c4c4;"></div>
<div class="t" style="left:13.9px;top:793.29px;font-size:13.6px;color:#111;font-weight:normal;transform:translateX(-50%);">20</div>
<div class="a" style="left:0px;top:831px;width:28px;height:1px;background:#c4c4c4;"></div>
<div class="t" style="left:13.9px;top:814.29px;font-size:13.6px;color:#111;font-weight:normal;transform:translateX(-50%);">21</div>
<div class="t" style="left:641px;top:317.86px;font-size:38.2px;color:#000;font-weight:bold;transform:translateX(-50%);">Annual Overview</div>
<div class="a" style="left:159.2px;top:366.2px;width:1083.8px;height:32px;background:#000;"></div>
<div class="a" style="left:162px;top:369.2px;width:1077.4px;height:26.6px;background:#5555ef;"></div>
<div class="a" style="left:47px;top:396px;width:115px;height:61px;background:#000;"></div>
<div class="a" style="left:50px;top:398.5px;width:109px;height:26.2px;background:#5555ef;"></div>
<div class="a" style="left:50px;top:427px;width:109px;height:26.7px;background:#5555ef;"></div>
<div class="a" style="left:160px;top:396px;width:1082px;height:60px;background:#000;"></div>
<div class="a" style="left:162px;top:398.4px;width:1077.6px;height:55.3px;background:#fff;"></div>
<div class="a" style="left:159px;top:424.7px;width:1081px;height:2.3px;background:#000;"></div>
<div class="a" style="left:252.0px;top:367px;width:2px;height:88px;background:#000;"></div>
<div class="a" style="left:344.6px;top:367px;width:2px;height:88px;background:#000;"></div>
<div class="a" style="left:423.6px;top:367px;width:2px;height:88px;background:#000;"></div>
<div class="a" style="left:503.7px;top:367px;width:2px;height:88px;background:#000;"></div>
<div class="a" style="left:588.5999999999999px;top:367px;width:2px;height:88px;background:#000;"></div>
<div class="a" style="left:681.6999999999999px;top:367px;width:2px;height:88px;background:#000;"></div>
<div class="a" style="left:774.8px;top:367px;width:2px;height:88px;background:#000;"></div>
<div class="a" style="left:868.0999999999999px;top:367px;width:2px;height:88px;background:#000;"></div>
<div class="a" style="left:960.9px;top:367px;width:2px;height:88px;background:#000;"></div>
<div class="a" style="left:1053.8px;top:367px;width:2px;height:88px;background:#000;"></div>
<div class="a" style="left:1146.8px;top:367px;width:2px;height:88px;background:#000;"></div>
<div class="t" style="left:206.4px;top:373.43px;font-size:16.5px;color:#fff;font-weight:normal;transform:translateX(-50%);letter-spacing:-0.034px;">January</div>
<div class="t" style="left:298.9px;top:373.43px;font-size:16.5px;color:#fff;font-weight:normal;transform:translateX(-50%);letter-spacing:0.211px;">February</div>
<div class="t" style="left:385px;top:373.43px;font-size:16.5px;color:#fff;font-weight:normal;transform:translateX(-50%);letter-spacing:0.514px;">March</div>
<div class="t" style="left:463.85px;top:373.43px;font-size:16.5px;color:#fff;font-weight:normal;transform:translateX(-50%);letter-spacing:0.548px;">April</div>
<div class="t" style="left:547.2px;top:373.43px;font-size:16.5px;color:#fff;font-weight:normal;transform:translateX(-50%);letter-spacing:1.114px;">May</div>
<div class="t" style="left:635.9px;top:373.43px;font-size:16.5px;color:#fff;font-weight:normal;transform:translateX(-50%);letter-spacing:0.040px;">June</div>
<div class="t" style="left:728.6px;top:373.43px;font-size:16.5px;color:#fff;font-weight:normal;transform:translateX(-50%);letter-spacing:-0.214px;">July</div>
<div class="t" style="left:821.6px;top:373.43px;font-size:16.5px;color:#fff;font-weight:normal;transform:translateX(-50%);letter-spacing:0.146px;">August</div>
<div class="t" style="left:914.85px;top:373.43px;font-size:16.5px;color:#fff;font-weight:normal;transform:translateX(-50%);letter-spacing:0.161px;">September</div>
<div class="t" style="left:1007.9px;top:373.43px;font-size:16.5px;color:#fff;font-weight:normal;transform:translateX(-50%);letter-spacing:0.368px;">October</div>
<div class="t" style="left:1101.15px;top:373.43px;font-size:16.5px;color:#fff;font-weight:normal;transform:translateX(-50%);letter-spacing:0.355px;">November</div>
<div class="t" style="left:1194.4px;top:373.43px;font-size:16.5px;color:#fff;font-weight:normal;transform:translateX(-50%);letter-spacing:0.170px;">December</div>
<div class="t" style="left:51.5px;top:402.33px;font-size:16.5px;color:#fff;font-weight:normal;">Current</div>
<div class="t" style="left:51.5px;top:431.33px;font-size:16.5px;color:#fff;font-weight:normal;">Previous Year</div>
<div class="t" style="left:249.5px;top:403.09px;font-size:17.5px;color:#000;font-weight:normal;transform:translateX(-100%);">1490</div>
<div class="t" style="left:249.5px;top:430.89px;font-size:17.5px;color:#000;font-weight:normal;transform:translateX(-100%);">800</div>
<svg class="a" style="left:164.8px;top:399.5px;" width="21" height="20" viewBox="0 0 21 20"><rect x="0.5" y="13.5" width="3.2" height="6" fill="#2a6aa0"/><rect x="5.5" y="9.5" width="3.2" height="10" fill="#2a6aa0"/><rect x="10.5" y="5.0" width="3.2" height="14.5" fill="#2a6aa0"/><rect x="16.0" y="1.0" width="2.2" height="18" fill="#dedede" stroke="#9a9a9a" stroke-width="1"/></svg>
<svg class="a" style="left:164.8px;top:428.5px;" width="21" height="20" viewBox="0 0 21 20"><rect x="0.5" y="13.5" width="3.2" height="6" fill="#2a6aa0"/><rect x="6.0" y="10.0" width="2.2" height="9" fill="#dedede" stroke="#9a9a9a" stroke-width="1"/><rect x="11.0" y="5.5" width="2.2" height="13.5" fill="#dedede" stroke="#9a9a9a" stroke-width="1"/><rect x="16.0" y="1.0" width="2.2" height="18" fill="#dedede" stroke="#9a9a9a" stroke-width="1"/></svg>
<div class="t" style="left:342.1px;top:403.09px;font-size:17.5px;color:#000;font-weight:normal;transform:translateX(-100%);">1020</div>
<div class="t" style="left:342.1px;top:430.89px;font-size:17.5px;color:#000;font-weight:normal;transform:translateX(-100%);">350</div>
<svg class="a" style="left:258.2px;top:399.5px;" width="21" height="20" viewBox="0 0 21 20"><rect x="0.5" y="13.5" width="3.2" height="6" fill="#2a6aa0"/><rect x="5.5" y="9.5" width="3.2" height="10" fill="#2a6aa0"/><rect x="11.0" y="5.5" width="2.2" height="13.5" fill="#dedede" stroke="#9a9a9a" stroke-width="1"/><rect x="16.0" y="1.0" width="2.2" height="18" fill="#dedede" stroke="#9a9a9a" stroke-width="1"/></svg>
<svg class="a" style="left:258.2px;top:428.5px;" width="21" height="20" viewBox="0 0 21 20"><rect x="1.0" y="14.0" width="2.2" height="5" fill="#dedede" stroke="#9a9a9a" stroke-width="1"/><rect x="6.0" y="10.0" width="2.2" height="9" fill="#dedede" stroke="#9a9a9a" stroke-width="1"/><rect x="11.0" y="5.5" width="2.2" height="13.5" fill="#dedede" stroke="#9a9a9a" stroke-width="1"/><rect x="16.0" y="1.0" width="2.2" height="18" fill="#dedede" stroke="#9a9a9a" stroke-width="1"/></svg>
<div class="t" style="left:421.1px;top:403.09px;font-size:17.5px;color:#000;font-weight:normal;transform:translateX(-100%);">160</div>
<div class="t" style="left:421.1px;top:430.89px;font-size:17.5px;color:#000;font-weight:normal;transform:translateX(-100%);">360</div>
<svg class="a" style="left:350.8px;top:399.5px;" width="21" height="20" viewBox="0 0 21 20"><rect x="1.0" y="14.0" width="2.2" height="5" fill="#dedede" stroke="#9a9a9a" stroke-width="1"/><rect x="6.0" y="10.0" width="2.2" height="9" fill="#dedede" stroke="#9a9a9a" stroke-width="1"/><rect x="11.0" y="5.5" width="2.2" height="13.5" fill="#dedede" stroke="#9a9a9a" stroke-width="1"/><rect x="16.0" y="1.0" width="2.2" height="18" fill="#dedede" stroke="#9a9a9a" stroke-width="1"/></svg>
<svg class="a" style="left:350.8px;top:428.5px;" width="21" height="20" viewBox="0 0 21 20"><rect x="1.0" y="14.0" width="2.2" height="5" fill="#dedede" stroke="#9a9a9a" stroke-width="1"/><rect x="6.0" y="10.0" width="2.2" height="9" fill="#dedede" stroke="#9a9a9a" stroke-width="1"/><rect x="11.0" y="5.5" width="2.2" height="13.5" fill="#dedede" stroke="#9a9a9a" stroke-width="1"/><rect x="16.0" y="1.0" width="2.2" height="18" fill="#dedede" stroke="#9a9a9a" stroke-width="1"/></svg>
<div class="t" style="left:501.2px;top:403.09px;font-size:17.5px;color:#000;font-weight:normal;transform:translateX(-100%);">360</div>
<div class="t" style="left:501.2px;top:430.89px;font-size:17.5px;color:#000;font-weight:normal;transform:translateX(-100%);">280</div>
<svg class="a" style="left:429.8px;top:399.5px;" width="21" height="20" viewBox="0 0 21 20"><rect x="1.0" y="14.0" width="2.2" height="5" fill="#dedede" stroke="#9a9a9a" stroke-width="1"/><rect x="6.0" y="10.0" width="2.2" height="9" fill="#dedede" stroke="#9a9a9a" stroke-width="1"/><rect x="11.0" y="5.5" width="2.2" height="13.5" fill="#dedede" stroke="#9a9a9a" stroke-width="1"/><rect x="16.0" y="1.0" width="2.2" height="18" fill="#dedede" stroke="#9a9a9a" stroke-width="1"/></svg>
<svg class="a" style="left:429.8px;top:428.5px;" width="21" height="20" viewBox="0 0 21 20"><rect x="1.0" y="14.0" width="2.2" height="5" fill="#dedede" stroke="#9a9a9a" stroke-width="1"/><rect x="6.0" y="10.0" width="2.2" height="9" fill="#dedede" stroke="#9a9a9a" stroke-width="1"/><rect x="11.0" y="5.5" width="2.2" height="13.5" fill="#dedede" stroke="#9a9a9a" stroke-width="1"/><rect x="16.0" y="1.0" width="2.2" height="18" fill="#dedede" stroke="#9a9a9a" stroke-width="1"/></svg>
<div class="t" style="left:586.0999999999999px;top:403.09px;font-size:17.5px;color:#000;font-weight:normal;transform:translateX(-100%);">920</div>
<div class="t" style="left:586.0999999999999px;top:430.89px;font-size:17.5px;color:#000;font-weight:normal;transform:translateX(-100%);">520</div>
<svg class="a" style="left:509.9px;top:399.5px;" width="21" height="20" viewBox="0 0 21 20"><rect x="0.5" y="13.5" width="3.2" height="6" fill="#2a6aa0"/><rect x="5.5" y="9.5" width="3.2" height="10" fill="#2a6aa0"/><rect x="11.0" y="5.5" width="2.2" height="13.5" fill="#dedede" stroke="#9a9a9a" stroke-width="1"/><rect x="16.0" y="1.0" width="2.2" height="18" fill="#dedede" stroke="#9a9a9a" stroke-width="1"/></svg>
<svg class="a" style="left:509.9px;top:428.5px;" width="21" height="20" viewBox="0 0 21 20"><rect x="0.5" y="13.5" width="3.2" height="6" fill="#2a6aa0"/><rect x="6.0" y="10.0" width="2.2" height="9" fill="#dedede" stroke="#9a9a9a" stroke-width="1"/><rect x="11.0" y="5.5" width="2.2" height="13.5" fill="#dedede" stroke="#9a9a9a" stroke-width="1"/><rect x="16.0" y="1.0" width="2.2" height="18" fill="#dedede" stroke="#9a9a9a" stroke-width="1"/></svg>
<div class="t" style="left:679.1999999999999px;top:403.09px;font-size:17.5px;color:#000;font-weight:normal;transform:translateX(-100%);">490</div>
<div class="t" style="left:679.1999999999999px;top:430.89px;font-size:17.5px;color:#000;font-weight:normal;transform:translateX(-100%);">290</div>
<svg class="a" style="left:594.8px;top:399.5px;" width="21" height="20" viewBox="0 0 21 20"><rect x="0.5" y="13.5" width="3.2" height="6" fill="#2a6aa0"/><rect x="6.0" y="10.0" width="2.2" height="9" fill="#dedede" stroke="#9a9a9a" stroke-width="1"/><rect x="11.0" y="5.5" width="2.2" height="13.5" fill="#dedede" stroke="#9a9a9a" stroke-width="1"/><rect x="16.0" y="1.0" width="2.2" height="18" fill="#dedede" stroke="#9a9a9a" stroke-width="1"/></svg>
<svg class="a" style="left:594.8px;top:428.5px;" width="21" height="20" viewBox="0 0 21 20"><rect x="1.0" y="14.0" width="2.2" height="5" fill="#dedede" stroke="#9a9a9a" stroke-width="1"/><rect x="6.0" y="10.0" width="2.2" height="9" fill="#dedede" stroke="#9a9a9a" stroke-width="1"/><rect x="11.0" y="5.5" width="2.2" height="13.5" fill="#dedede" stroke="#9a9a9a" stroke-width="1"/><rect x="16.0" y="1.0" width="2.2" height="18" fill="#dedede" stroke="#9a9a9a" stroke-width="1"/></svg>
<div class="t" style="left:772.3px;top:403.09px;font-size:17.5px;color:#000;font-weight:normal;transform:translateX(-100%);">280</div>
<div class="t" style="left:772.3px;top:430.89px;font-size:17.5px;color:#000;font-weight:normal;transform:translateX(-100%);">450</div>
<svg class="a" style="left:687.9px;top:399.5px;" width="21" height="20" viewBox="0 0 21 20"><rect x="1.0" y="14.0" width="2.2" height="5" fill="#dedede" stroke="#9a9a9a" stroke-width="1"/><rect x="6.0" y="10.0" width="2.2" height="9" fill="#dedede" stroke="#9a9a9a" stroke-width="1"/><rect x="11.0" y="5.5" width="2.2" height="13.5" fill="#dedede" stroke="#9a9a9a" stroke-width="1"/><rect x="16.0" y="1.0" width="2.2" height="18" fill="#dedede" stroke="#9a9a9a" stroke-width="1"/></svg>
<svg class="a" style="left:687.9px;top:428.5px;" width="21" height="20" viewBox="0 0 21 20"><rect x="1.0" y="14.0" width="2.2" height="5" fill="#dedede" stroke="#9a9a9a" stroke-width="1"/><rect x="6.0" y="10.0" width="2.2" height="9" fill="#dedede" stroke="#9a9a9a" stroke-width="1"/><rect x="11.0" y="5.5" width="2.2" height="13.5" fill="#dedede" stroke="#9a9a9a" stroke-width="1"/><rect x="16.0" y="1.0" width="2.2" height="18" fill="#dedede" stroke="#9a9a9a" stroke-width="1"/></svg>
<div class="t" style="left:865.5999999999999px;top:403.09px;font-size:17.5px;color:#000;font-weight:normal;transform:translateX(-100%);">920</div>
<div class="t" style="left:865.5999999999999px;top:430.89px;font-size:17.5px;color:#000;font-weight:normal;transform:translateX(-100%);">604</div>
<svg class="a" style="left:781.0px;top:399.5px;" width="21" height="20" viewBox="0 0 21 20"><rect x="0.5" y="13.5" width="3.2" height="6" fill="#2a6aa0"/><rect x="5.5" y="9.5" width="3.2" height="10" fill="#2a6aa0"/><rect x="11.0" y="5.5" width="2.2" height="13.5" fill="#dedede" stroke="#9a9a9a" stroke-width="1"/><rect x="16.0" y="1.0" width="2.2" height="18" fill="#dedede" stroke="#9a9a9a" stroke-width="1"/></svg>
<svg class="a" style="left:781.0px;top:428.5px;" width="21" height="20" viewBox="0 0 21 20"><rect x="0.5" y="13.5" width="3.2" height="6" fill="#2a6aa0"/><rect x="6.0" y="10.0" width="2.2" height="9" fill="#dedede" stroke="#9a9a9a" stroke-width="1"/><rect x="11.0" y="5.5" width="2.2" height="13.5" fill="#dedede" stroke="#9a9a9a" stroke-width="1"/><rect x="16.0" y="1.0" width="2.2" height="18" fill="#dedede" stroke="#9a9a9a" stroke-width="1"/></svg>
<div class="t" style="left:958.4px;top:403.09px;font-size:17.5px;color:#000;font-weight:normal;transform:translateX(-100%);">111</div>
<div class="t" style="left:958.4px;top:430.89px;font-size:17.5px;color:#000;font-weight:normal;transform:translateX(-100%);">780</div>
<svg class="a" style="left:874.3px;top:399.5px;" width="21" height="20" viewBox="0 0 21 20"><rect x="1.0" y="14.0" width="2.2" height="5" fill="#dedede" stroke="#9a9a9a" stroke-width="1"/><rect x="6.0" y="10.0" width="2.2" height="9" fill="#dedede" stroke="#9a9a9a" stroke-width="1"/><rect x="11.0" y="5.5" width="2.2" height="13.5" fill="#dedede" stroke="#9a9a9a" stroke-width="1"/><rect x="16.0" y="1.0" width="2.2" height="18" fill="#dedede" stroke="#9a9a9a" stroke-width="1"/></svg>
<svg class="a" style="left:874.3px;top:428.5px;" width="21" height="20" viewBox="0 0 21 20"><rect x="0.5" y="13.5" width="3.2" height="6" fill="#2a6aa0"/><rect x="6.0" y="10.0" width="2.2" height="9" fill="#dedede" stroke="#9a9a9a" stroke-width="1"/><rect x="11.0" y="5.5" width="2.2" height="13.5" fill="#dedede" stroke="#9a9a9a" stroke-width="1"/><rect x="16.0" y="1.0" width="2.2" height="18" fill="#dedede" stroke="#9a9a9a" stroke-width="1"/></svg>
<div class="t" style="left:1051.3px;top:403.09px;font-size:17.5px;color:#000;font-weight:normal;transform:translateX(-100%);">830</div>
<div class="t" style="left:1051.3px;top:430.89px;font-size:17.5px;color:#000;font-weight:normal;transform:translateX(-100%);">340</div>
<svg class="a" style="left:967.1px;top:399.5px;" width="21" height="20" viewBox="0 0 21 20"><rect x="0.5" y="13.5" width="3.2" height="6" fill="#2a6aa0"/><rect x="5.5" y="9.5" width="3.2" height="10" fill="#2a6aa0"/><rect x="11.0" y="5.5" width="2.2" height="13.5" fill="#dedede" stroke="#9a9a9a" stroke-width="1"/><rect x="16.0" y="1.0" width="2.2" height="18" fill="#dedede" stroke="#9a9a9a" stroke-width="1"/></svg>
<svg class="a" style="left:967.1px;top:428.5px;" width="21" height="20" viewBox="0 0 21 20"><rect x="1.0" y="14.0" width="2.2" height="5" fill="#dedede" stroke="#9a9a9a" stroke-width="1"/><rect x="6.0" y="10.0" width="2.2" height="9" fill="#dedede" stroke="#9a9a9a" stroke-width="1"/><rect x="11.0" y="5.5" width="2.2" height="13.5" fill="#dedede" stroke="#9a9a9a" stroke-width="1"/><rect x="16.0" y="1.0" width="2.2" height="18" fill="#dedede" stroke="#9a9a9a" stroke-width="1"/></svg>
<div class="t" style="left:1144.3px;top:403.09px;font-size:17.5px;color:#000;font-weight:normal;transform:translateX(-100%);">650</div>
<div class="t" style="left:1144.3px;top:430.89px;font-size:17.5px;color:#000;font-weight:normal;transform:translateX(-100%);">590</div>
<svg class="a" style="left:1060.0px;top:399.5px;" width="21" height="20" viewBox="0 0 21 20"><rect x="0.5" y="13.5" width="3.2" height="6" fill="#2a6aa0"/><rect x="6.0" y="10.0" width="2.2" height="9" fill="#dedede" stroke="#9a9a9a" stroke-width="1"/><rect x="11.0" y="5.5" width="2.2" height="13.5" fill="#dedede" stroke="#9a9a9a" stroke-width="1"/><rect x="16.0" y="1.0" width="2.2" height="18" fill="#dedede" stroke="#9a9a9a" stroke-width="1"/></svg>
<svg class="a" style="left:1060.0px;top:428.5px;" width="21" height="20" viewBox="0 0 21 20"><rect x="0.5" y="13.5" width="3.2" height="6" fill="#2a6aa0"/><rect x="6.0" y="10.0" width="2.2" height="9" fill="#dedede" stroke="#9a9a9a" stroke-width="1"/><rect x="11.0" y="5.5" width="2.2" height="13.5" fill="#dedede" stroke="#9a9a9a" stroke-width="1"/><rect x="16.0" y="1.0" width="2.2" height="18" fill="#dedede" stroke="#9a9a9a" stroke-width="1"/></svg>
<div class="t" style="left:1237.3999999999999px;top:403.09px;font-size:17.5px;color:#000;font-weight:normal;transform:translateX(-100%);">1860</div>
<div class="t" style="left:1237.3999999999999px;top:430.89px;font-size:17.5px;color:#000;font-weight:normal;transform:translateX(-100%);">1450</div>
<svg class="a" style="left:1153.0px;top:399.5px;" width="21" height="20" viewBox="0 0 21 20"><rect x="0.5" y="13.5" width="3.2" height="6" fill="#2a6aa0"/><rect x="5.5" y="9.5" width="3.2" height="10" fill="#2a6aa0"/><rect x="10.5" y="5.0" width="3.2" height="14.5" fill="#2a6aa0"/><rect x="15.5" y="0.5" width="3.2" height="19" fill="#2a6aa0"/></svg>
<svg class="a" style="left:1153.0px;top:428.5px;" width="21" height="20" viewBox="0 0 21 20"><rect x="0.5" y="13.5" width="3.2" height="6" fill="#2a6aa0"/><rect x="5.5" y="9.5" width="3.2" height="10" fill="#2a6aa0"/><rect x="10.5" y="5.0" width="3.2" height="14.5" fill="#2a6aa0"/><rect x="16.0" y="1.0" width="2.2" height="18" fill="#dedede" stroke="#9a9a9a" stroke-width="1"/></svg>
<div class="a" style="left:1264px;top:311px;width:16px;height:521px;background:#ececec;"></div>
<div class="a" style="left:1264px;top:311px;width:1px;height:521px;background:#d0d0d0;"></div>
<svg class="a" style="left:1266px;top:298px;" width="12" height="10" viewBox="0 0 12 10"><path d="M1 8 L6 3 L11 8 Z" fill="#c8c8c8"/></svg>
<div class="a" style="left:1267px;top:311px;width:10px;height:154px;background:#bdbdbd;border-radius:5px;"></div>
<svg class="a" style="left:1266px;top:775px;" width="12" height="10" viewBox="0 0 12 10"><path d="M1 2 L6 7 L11 2 Z" fill="#c8c8c8"/></svg>
<div class="a" style="left:1264px;top:789px;width:16px;height:1px;background:#cfcfcf;"></div>
<div class="a" style="left:1264px;top:805px;width:16px;height:1px;background:#cfcfcf;"></div>
<div class="a" style="left:1264px;top:821px;width:16px;height:1px;background:#cfcfcf;"></div>
<div class="a" style="left:1264px;top:837px;width:16px;height:1px;background:#cfcfcf;"></div>
<svg class="a" style="left:1266px;top:790px;" width="12" height="14" viewBox="0 0 12 14"><path d="M3.5 6.5 L6.5 3.5 L9.5 6.5 Z M3.5 10 L6.5 7 L9.5 10 Z" fill="#444"/><path d="M3.5 11.5 H9.5" stroke="#444" stroke-width="0.9"/></svg>
<svg class="a" style="left:1266px;top:806px;" width="12" height="14" viewBox="0 0 12 14"><circle cx="6.5" cy="6.8" r="2.6" fill="#e0262a"/></svg>
<svg class="a" style="left:1266px;top:822px;" width="12" height="14" viewBox="0 0 12 14"><path d="M3.5 4 L6.5 7 L9.5 4 Z M3.5 7.5 L6.5 10.5 L9.5 7.5 Z" fill="#444"/><path d="M3.5 2.5 H9.5" stroke="#444" stroke-width="0.9"/></svg>
<svg class="a" style="left:1264px;top:837px;" width="16" height="15" viewBox="0 0 16 15"><path d="M2 2.5 H15 M5.5 1 V14" stroke="#555" stroke-width="0.9"/><path d="M8 5 L13.5 10.5 M8 5 V8.5 M8 5 H11.5" stroke="#555" stroke-width="0.9" fill="none"/></svg>
<div class="a" style="left:44px;top:477px;width:1197px;height:350px;background:#eef3fa;"></div>
<svg class="a" style="left:44px;top:477px;" width="1197" height="350" viewBox="0 0 1197 350"><defs>
<linearGradient id="cg" gradientUnits="userSpaceOnUse" x1="0" y1="41.4" x2="0" y2="306.0">
<stop offset="0" stop-color="#ff7814"/>
<stop offset="0.57" stop-color="#ff4a4c"/>
<stop offset="1" stop-color="#ff37b4"/>
</linearGradient>
<linearGradient id="lg" x1="0" y1="0" x2="0" y2="1">
<stop offset="0" stop-color="#6e6e6e"/>
<stop offset="0.55" stop-color="#000"/>
<stop offset="1" stop-color="#000"/>
</linearGradient>
<filter id="sh" x="-50%" y="-50%" width="200%" height="200%"><feGaussianBlur stdDeviation="2.2"/></filter>
</defs>
<polygon points="61.90,306.80 61.90,191.30 63.25,192.19 160.67,256.21 258.10,254.79 355.52,266.17 452.94,232.02 550.36,264.74 647.79,241.98 745.21,220.07 842.63,195.04 940.05,257.63 1037.48,222.07 1134.90,99.72 1134.90,306.80" fill="#0087bd"/>
<polygon points="61.90,306.80 61.90,93.11 63.25,94.03 160.67,160.89 258.10,283.24 355.52,254.79 452.94,175.12 550.36,236.29 647.79,266.17 745.21,175.12 842.63,290.21 940.05,187.92 1037.48,213.53 1134.90,41.40 1134.90,306.80" fill="url(#cg)" fill-opacity="0.72"/>
<polyline points="63.25,94.03 160.67,160.89 258.10,283.24 355.52,254.79 452.94,175.12 550.36,236.29 647.79,266.17 745.21,175.12 842.63,290.21 940.05,187.92 1037.48,213.53 1134.90,41.40" fill="none" stroke="#1414f0" stroke-width="1.15"/>
<polygon points="49.50,108.53 77.00,108.53 63.25,80.03" fill="#1a10ff"/><polygon points="146.92,175.39 174.42,175.39 160.67,146.89" fill="#1a10ff"/><polygon points="244.35,297.74 271.85,297.74 258.10,269.24" fill="#1a10ff"/><polygon points="341.77,269.29 369.27,269.29 355.52,240.79" fill="#1a10ff"/><polygon points="439.19,189.62 466.69,189.62 452.94,161.12" fill="#1a10ff"/><polygon points="536.61,250.79 564.11,250.79 550.36,222.29" fill="#1a10ff"/><polygon points="634.04,280.67 661.54,280.67 647.79,252.17" fill="#1a10ff"/><polygon points="731.46,189.62 758.96,189.62 745.21,161.12" fill="#1a10ff"/><polygon points="828.88,304.71 856.38,304.71 842.63,276.21" fill="#1a10ff"/><polygon points="926.30,202.42 953.80,202.42 940.05,173.92" fill="#1a10ff"/><polygon points="1023.73,228.03 1051.23,228.03 1037.48,199.53" fill="#1a10ff"/><polygon points="1121.15,55.90 1148.65,55.90 1134.90,27.40" fill="#1a10ff"/><rect x="43.75" y="65.53" width="40" height="28" fill="#000" opacity="0.55" filter="url(#sh)"/><rect x="43.25" y="63.03" width="40" height="28" fill="url(#lg)"/><text x="62.05" y="80.73" font-size="13" fill="#fff" text-anchor="middle" font-family="Liberation Sans, sans-serif">1490</text><rect x="141.17" y="132.39" width="40" height="28" fill="#000" opacity="0.55" filter="url(#sh)"/><rect x="140.67" y="129.89" width="40" height="28" fill="url(#lg)"/><text x="159.47" y="147.59" font-size="13" fill="#fff" text-anchor="middle" font-family="Liberation Sans, sans-serif">1020</text><rect x="242.10" y="254.74" width="33" height="28" fill="#000" opacity="0.55" filter="url(#sh)"/><rect x="241.60" y="252.24" width="33" height="28" fill="url(#lg)"/><text x="256.90" y="269.94" font-size="13" fill="#fff" text-anchor="middle" font-family="Liberation Sans, sans-serif">160</text><rect x="339.52" y="226.29" width="33" height="28" fill="#000" opacity="0.55" filter="url(#sh)"/><rect x="339.02" y="223.79" width="33" height="28" fill="url(#lg)"/><text x="354.32" y="241.49" font-size="13" fill="#fff" text-anchor="middle" font-family="Liberation Sans, sans-serif">360</text><rect x="436.94" y="146.62" width="33" height="28" fill="#000" opacity="0.55" filter="url(#sh)"/><rect x="436.44" y="144.12" width="33" height="28" fill="url(#lg)"/><text x="451.74" y="161.82" font-size="13" fill="#fff" text-anchor="middle" font-family="Liberation Sans, sans-serif">920</text><rect x="534.36" y="207.79" width="33" height="28" fill="#000" opacity="0.55" filter="url(#sh)"/><rect x="533.86" y="205.29" width="33" height="28" fill="url(#lg)"/><text x="549.16" y="222.99" font-size="13" fill="#fff" text-anchor="middle" font-family="Liberation Sans, sans-serif">490</text><rect x="631.79" y="237.67" width="33" height="28" fill="#000" opacity="0.55" filter="url(#sh)"/><rect x="631.29" y="235.17" width="33" height="28" fill="url(#lg)"/><text x="646.59" y="252.87" font-size="13" fill="#fff" text-anchor="middle" font-family="Liberation Sans, sans-serif">280</text><rect x="729.21" y="146.62" width="33" height="28" fill="#000" opacity="0.55" filter="url(#sh)"/><rect x="728.71" y="144.12" width="33" height="28" fill="url(#lg)"/><text x="744.01" y="161.82" font-size="13" fill="#fff" text-anchor="middle" font-family="Liberation Sans, sans-serif">920</text><rect x="826.63" y="261.71" width="33" height="28" fill="#000" opacity="0.55" filter="url(#sh)"/><rect x="826.13" y="259.21" width="33" height="28" fill="url(#lg)"/><text x="841.43" y="276.91" font-size="13" fill="#fff" text-anchor="middle" font-family="Liberation Sans, sans-serif">111</text><rect x="924.05" y="159.42" width="33" height="28" fill="#000" opacity="0.55" filter="url(#sh)"/><rect x="923.55" y="156.92" width="33" height="28" fill="url(#lg)"/><text x="938.85" y="174.62" font-size="13" fill="#fff" text-anchor="middle" font-family="Liberation Sans, sans-serif">830</text><rect x="1021.48" y="185.03" width="33" height="28" fill="#000" opacity="0.55" filter="url(#sh)"/><rect x="1020.98" y="182.53" width="33" height="28" fill="url(#lg)"/><text x="1036.28" y="200.23" font-size="13" fill="#fff" text-anchor="middle" font-family="Liberation Sans, sans-serif">650</text><rect x="1115.40" y="12.90" width="40" height="28" fill="#000" opacity="0.55" filter="url(#sh)"/><rect x="1114.90" y="10.40" width="40" height="28" fill="url(#lg)"/><text x="1133.70" y="28.10" font-size="13" fill="#fff" text-anchor="middle" font-family="Liberation Sans, sans-serif">1860</text><text x="62.30" y="333" font-size="13.4" fill="#1c1c78" stroke="#1c1c78" stroke-width="0.25" text-anchor="middle" font-family="Liberation Sans, sans-serif">January</text><text x="159.60" y="333" font-size="13.4" fill="#1c1c78" stroke="#1c1c78" stroke-width="0.25" text-anchor="middle" font-family="Liberation Sans, sans-serif">February</text><text x="256.90" y="333" font-size="13.4" fill="#1c1c78" stroke="#1c1c78" stroke-width="0.25" text-anchor="middle" font-family="Liberation Sans, sans-serif">March</text><text x="354.20" y="333" font-size="13.4" fill="#1c1c78" stroke="#1c1c78" stroke-width="0.25" text-anchor="middle" font-family="Liberation Sans, sans-serif">April</text><text x="451.50" y="333" font-size="13.4" fill="#1c1c78" stroke="#1c1c78" stroke-width="0.25" text-anchor="middle" font-family="Liberation Sans, sans-serif">May</text><text x="548.80" y="333" font-size="13.4" fill="#1c1c78" stroke="#1c1c78" stroke-width="0.25" text-anchor="middle" font-family="Liberation Sans, sans-serif">June</text><text x="646.10" y="333" font-size="13.4" fill="#1c1c78" stroke="#1c1c78" stroke-width="0.25" text-anchor="middle" font-family="Liberation Sans, sans-serif">July</text><text x="743.40" y="333" font-size="13.4" fill="#1c1c78" stroke="#1c1c78" stroke-width="0.25" text-anchor="middle" font-family="Liberation Sans, sans-serif">August</text><text x="840.70" y="333" font-size="13.4" fill="#1c1c78" stroke="#1c1c78" stroke-width="0.25" text-anchor="middle" font-family="Liberation Sans, sans-serif">September</text><text x="938.00" y="333" font-size="13.4" fill="#1c1c78" stroke="#1c1c78" stroke-width="0.25" text-anchor="middle" font-family="Liberation Sans, sans-serif">October</text><text x="1035.30" y="333" font-size="13.4" fill="#1c1c78" stroke="#1c1c78" stroke-width="0.25" text-anchor="middle" font-family="Liberation Sans, sans-serif">November</text><text x="1132.60" y="333" font-size="13.4" fill="#1c1c78" stroke="#1c1c78" stroke-width="0.25" text-anchor="middle" font-family="Liberation Sans, sans-serif">December</text></svg>
<div class="a" style="left:0px;top:267px;width:1280px;height:27px;background:#ebebeb;"></div>
<div class="a" style="left:0px;top:266px;width:1280px;height:1px;background:#c4c4c4;"></div>
<svg class="a" style="left:11px;top:274px;" width="15" height="15" viewBox="0 0 15 15"><rect x="1" y="1" width="12.5" height="1" fill="#5a5a5a"/><rect x="1" y="4" width="12.5" height="1" fill="#5a5a5a"/><rect x="1" y="7" width="12.5" height="1" fill="#5a5a5a"/><rect x="1" y="10" width="12.5" height="1" fill="#5a5a5a"/><rect x="1" y="13" width="12.5" height="1" fill="#5a5a5a"/></svg>
<div class="a" style="left:34.5px;top:272.5px;width:1px;height:17px;background:#c2c2c2;"></div>
<div class="a" style="left:65.4px;top:272.5px;width:1px;height:17px;background:#c2c2c2;"></div>
<div class="a" style="left:149.5px;top:272.5px;width:1px;height:17px;background:#c2c2c2;"></div>
<div class="a" style="left:180.7px;top:272.5px;width:1px;height:17px;background:#c2c2c2;"></div>
<div class="a" style="left:293.6px;top:272.5px;width:1px;height:17px;background:#c2c2c2;"></div>
<svg class="a" style="left:42px;top:272px;" width="15" height="19" viewBox="0 0 15 19"><path d="M3.2 5.5 A3.4 3.4 0 0 1 9.8 5.5" fill="none" stroke="#6f9ee8" stroke-width="1.4"/><path d="M5 13.5 V5.5 Q5 4 6.5 4 Q8 4 8 5.5 V10 Q8 9 9.3 9 Q10.5 9 10.5 10.2 V11 Q10.5 10 11.8 10 Q13 10 13 11.5 V14.5 Q13 17.5 10.5 18.5 H7.5 Q5.5 18 3.5 15.5 L1.8 12.8 Q1.2 11.8 2.2 11.4 Q3.2 11 4 12 Z" fill="#fff" stroke="#555" stroke-width="1"/></svg>
<svg class="a" style="left:73px;top:273px;" width="14" height="17" viewBox="0 0 14 17"><path d="M1.5 1.5 H8.5 L12.5 5.5 V15.5 H1.5 Z" fill="#fff" stroke="#555" stroke-width="1"/><path d="M8.5 1.5 V5.5 H12.5" fill="none" stroke="#555" stroke-width="0.8"/><path d="M5 13 h1 M7 13 h1 M9 13 h1" stroke="#333" stroke-width="1"/></svg>
<svg class="a" style="left:95.75px;top:277.9px;" width="7.5" height="4.2" viewBox="0 0 7.5 4.2"><path d="M0 0 H7.5 L3.75 4.2 Z" fill="#333"/></svg>
<svg class="a" style="left:109px;top:273px;" width="20" height="16" viewBox="0 0 20 16"><path d="M1.5 3 Q1.5 1.5 3 1.5 H7 L8.5 3.5 H14.5 Q16 3.5 16 5 V7" fill="#f8d8a0" stroke="#c8874a" stroke-width="1"/><path d="M1.5 14.5 L4.5 7 H18.5 L15.5 14.5 Z" fill="#fcd79a" stroke="#c8874a" stroke-width="1"/><path d="M1.5 3 V14.5" stroke="#c8874a"/></svg>
<svg class="a" style="left:134.75px;top:277.9px;" width="7.5" height="4.2" viewBox="0 0 7.5 4.2"><path d="M0 0 H7.5 L3.75 4.2 Z" fill="#333"/></svg>
<svg class="a" style="left:156px;top:272px;" width="17" height="17" viewBox="0 0 17 17"><rect x="1" y="1" width="15" height="15" rx="1.5" fill="#5b8ee6" stroke="#555" stroke-width="1"/><rect x="4" y="1.5" width="9" height="5.5" fill="#f2f2f2"/><rect x="4" y="10" width="9" height="5.5" fill="#fff" stroke="#555" stroke-width="0.8"/></svg>
<svg class="a" style="left:187px;top:273px;" width="15" height="16" viewBox="0 0 15 16"><path d="M2.5 4 H6.5 A4.6 4.6 0 0 1 8.5 12.8 L5 15.5" fill="none" stroke="#b4b4b4" stroke-width="1.5"/><path d="M5 0.8 L1.5 4 L5 7.2" fill="none" stroke="#b4b4b4" stroke-width="1.5"/></svg>
<svg class="a" style="left:210.65px;top:277.9px;" width="7.5" height="4.2" viewBox="0 0 7.5 4.2"><path d="M0 0 H7.5 L3.75 4.2 Z" fill="#999"/></svg>
<svg class="a" style="left:228px;top:273px;" width="15" height="16" viewBox="0 0 15 16"><path d="M10 4 H6.5 A4.6 4.6 0 0 0 4.5 12.8 L8 15.5" fill="none" stroke="#2f77b5" stroke-width="1.6"/><path d="M8.5 0.5 L13.5 4 L8.5 7.5 Z" fill="#2f77b5"/></svg>
<svg class="a" style="left:251.85px;top:277.9px;" width="7.5" height="4.2" viewBox="0 0 7.5 4.2"><path d="M0 0 H7.5 L3.75 4.2 Z" fill="#333"/></svg>
<svg class="a" style="left:269px;top:273px;" width="18" height="16" viewBox="0 0 18 16"><path d="M14 9 A6.5 6.5 0 1 1 11 2.8" fill="none" stroke="#2f77b5" stroke-width="1.7"/><path d="M12 6 H17.5 L14.8 10 Z" fill="#2f77b5"/></svg>
<svg class="a" style="left:302px;top:273px;" width="12" height="17" viewBox="0 0 12 17"><path d="M1.5 1 V13 L4.5 10.5 L7 16 L9 15 L6.5 10 H10.5 Z" fill="#fff" stroke="#666" stroke-width="1"/></svg>
<div class="t" style="left:326.3px;top:271.84px;font-size:12px;color:#555;font-weight:normal;transform:translateX(-50%);">&#187;</div>
<div class="a" style="left:338px;top:267px;width:1px;height:27px;background:#d6d6d6;"></div>
<div class="a" style="left:348.5px;top:271.5px;width:199.5px;height:24px;background:#fff;border:1px solid #c0c0c0;border-bottom:none;border-radius:5px 5px 0 0;box-sizing:border-box;"></div>
<svg class="a" style="left:354.5px;top:274.5px;" width="18" height="18" viewBox="0 0 18 18"><path d="M1.5 1.5 H10 L13.5 5 V16.5 H1.5 Z" fill="#fff" stroke="#999" stroke-width="1"/><path d="M10 1.5 V5 H13.5" fill="none" stroke="#999" stroke-width="0.8"/><g fill="#9fd39a"><rect x="3" y="7" width="2.2" height="2"/><rect x="6" y="7" width="2.2" height="2"/><rect x="3" y="10" width="2.2" height="2"/><rect x="6" y="10" width="2.2" height="2"/><rect x="3" y="13" width="2.2" height="2"/><rect x="6" y="13" width="2.2" height="2"/></g><rect x="8.5" y="8" width="8" height="9" fill="#1e8c45"/><path d="M10.5 10 L14.5 15 M14.5 10 L10.5 15" stroke="#fff" stroke-width="1.3"/></svg>
<div class="t" style="left:379.4px;top:275.97px;font-size:13.5px;color:#111;font-weight:normal;letter-spacing:0.442px;">Annual Overview.xlsx</div>
<svg class="a" style="left:528.3px;top:278.7px;" width="9" height="9" viewBox="0 0 9 9"><path d="M0.8 0.8 L8.2 8.2 M8.2 0.8 L0.8 8.2" stroke="#111" stroke-width="1.3"/></svg>
<div class="a" style="left:548.6px;top:272.8px;width:199.39999999999998px;height:21.7px;background:#ebebeb;border:1px solid #c4c4c4;border-bottom:none;border-radius:5px 5px 0 0;box-sizing:border-box;"></div>
<svg class="a" style="left:555.1px;top:275.5px;" width="18" height="18" viewBox="0 0 18 18"><path d="M1.5 1.5 H10 L13.5 5 V16.5 H1.5 Z" fill="#fff" stroke="#999" stroke-width="1"/><path d="M10 1.5 V5 H13.5" fill="none" stroke="#999" stroke-width="0.8"/><g fill="#9fd39a"><rect x="3" y="7" width="2.2" height="2"/><rect x="6" y="7" width="2.2" height="2"/><rect x="3" y="10" width="2.2" height="2"/><rect x="6" y="10" width="2.2" height="2"/><rect x="3" y="13" width="2.2" height="2"/><rect x="6" y="13" width="2.2" height="2"/></g><rect x="8.5" y="8" width="8" height="9" fill="#1e8c45"/><path d="M10.5 10 L14.5 15 M14.5 10 L10.5 15" stroke="#fff" stroke-width="1.3"/></svg>
<div class="t" style="left:589.4000000000001px;top:276.57px;font-size:13.5px;color:#111;font-weight:normal;letter-spacing:0.616px;">Test Analysis.xlsx</div>
<svg class="a" style="left:728.4px;top:279.5px;" width="9" height="9" viewBox="0 0 9 9"><path d="M0.8 0.8 L8.2 8.2 M8.2 0.8 L0.8 8.2" stroke="#111" stroke-width="1.3"/></svg>
<div class="a" style="left:749px;top:272.8px;width:198px;height:21.7px;background:#ebebeb;border:1px solid #c4c4c4;border-bottom:none;border-radius:5px 5px 0 0;box-sizing:border-box;"></div>
<svg class="a" style="left:755.5px;top:275.5px;" width="18" height="18" viewBox="0 0 18 18"><path d="M1.5 1.5 H10 L13.5 5 V16.5 H1.5 Z" fill="#fff" stroke="#999" stroke-width="1"/><path d="M10 1.5 V5 H13.5" fill="none" stroke="#999" stroke-width="0.8"/><g fill="#9fd39a"><rect x="3" y="7" width="2.2" height="2"/><rect x="6" y="7" width="2.2" height="2"/><rect x="3" y="10" width="2.2" height="2"/><rect x="6" y="10" width="2.2" height="2"/><rect x="3" y="13" width="2.2" height="2"/><rect x="6" y="13" width="2.2" height="2"/></g><rect x="8.5" y="8" width="8" height="9" fill="#1e8c45"/><path d="M10.5 10 L14.5 15 M14.5 10 L10.5 15" stroke="#fff" stroke-width="1.3"/></svg>
<div class="t" style="left:790.2px;top:276.57px;font-size:13.5px;color:#111;font-weight:normal;letter-spacing:0.274px;">Sales Figures.xlsx</div>
<svg class="a" style="left:928.5px;top:279.5px;" width="9" height="9" viewBox="0 0 9 9"><path d="M0.8 0.8 L8.2 8.2 M8.2 0.8 L0.8 8.2" stroke="#111" stroke-width="1.3"/></svg>
<div class="a" style="left:0px;top:294px;width:1280px;height:1px;background:#c2c2c2;"></div>
<div class="a" style="left:349.5px;top:294px;width:197.5px;height:1px;background:#fff;"></div>
<svg class="a" style="left:6px;top:838px;" width="8" height="9" viewBox="0 0 8 9"><rect x="0" y="0.5" width="1.6" height="8" fill="#bbb"/><path d="M1.5 4.5 L5.5 0.5 V2.8 H8 V6.2 H5.5 V8.5 Z" fill="#bbb"/></svg>
<svg class="a" style="left:27px;top:838px;" width="8" height="9" viewBox="0 0 8 9"><path d="M0 4.5 L4 0.5 V2.8 H8 V6.2 H4 V8.5 Z" fill="#bbb"/></svg>
<svg class="a" style="left:47.7px;top:838px;" width="8" height="9" viewBox="0 0 8 9"><path d="M8 4.5 L4 0.5 V2.8 H0 V6.2 H4 V8.5 Z" fill="#bbb"/></svg>
<svg class="a" style="left:68.7px;top:838px;" width="8" height="9" viewBox="0 0 8 9"><path d="M6.5 4.5 L2.5 0.5 V2.8 H0 V6.2 H2.5 V8.5 Z" fill="#bbb"/><rect x="6.4" y="0.5" width="1.6" height="8" fill="#bbb"/></svg>
<div class="a" style="left:87.2px;top:831px;width:109.4px;height:17.5px;background:#fff;border-left:1px solid #b8b8b8;border-right:1px solid #b8b8b8;box-sizing:border-box;"></div>
<div class="a" style="left:88px;top:848px;width:108.5px;height:2px;background:#3b8c47;"></div>
<div class="t" style="left:91.6px;top:836.29px;font-size:11px;color:#111;font-weight:bold;letter-spacing:0.797px;">Annual Overview</div>
<div class="t" style="left:204.6px;top:836.12px;font-size:11.2px;color:#111;font-weight:normal;letter-spacing:0.571px;">Products</div>
<div class="a" style="left:259px;top:835.5px;width:1px;height:12px;background:#999;"></div>
<div class="t" style="left:265.9px;top:836.12px;font-size:11.2px;color:#111;font-weight:normal;letter-spacing:0.212px;">Branches</div>
<div class="a" style="left:321px;top:835.5px;width:1px;height:12px;background:#999;"></div>
<svg class="a" style="left:333px;top:838.5px;" width="8" height="8" viewBox="0 0 8 8"><path d="M4 0 V8 M0 4 H8" stroke="#444" stroke-width="1.8"/></svg>
<div class="a" style="left:629px;top:832px;width:1px;height:20px;background:#b8b8b8;"></div>
<div class="a" style="left:632px;top:832px;width:1px;height:20px;background:#b8b8b8;"></div>
<svg class="a" style="left:638px;top:838px;" width="8" height="9" viewBox="0 0 8 9"><path d="M7 0.5 V8.5 L1 4.5 Z" fill="#c2c2c2"/></svg>
<div class="a" style="left:649.7px;top:837.3px;width:223.2px;height:9.3px;background:#bdbdbd;border-radius:5px;"></div>
<svg class="a" style="left:1249px;top:838px;" width="8" height="9" viewBox="0 0 8 9"><path d="M1 0.5 V8.5 L7 4.5 Z" fill="#c2c2c2"/></svg>
<div class="a" style="left:485.5px;top:857px;width:1px;height:18px;background:#c0c0c0;"></div>
<div class="a" style="left:631px;top:853px;width:1px;height:4px;background:#c0c0c0;"></div>
<svg class="a" style="left:906px;top:858px;" width="16" height="15" viewBox="0 0 16 15"><path d="M2.5 8 A5.5 5.5 0 0 1 12 3.5" fill="none" stroke="#b8b8b8" stroke-width="1.2"/><path d="M13.5 7 A5.5 5.5 0 0 1 4 11.5" fill="none" stroke="#b8b8b8" stroke-width="1.2"/><path d="M10 2 L13 3.5 L11.5 6" fill="none" stroke="#b8b8b8" stroke-width="1.2"/><path d="M6 13 L3 11.5 L4.5 9" fill="none" stroke="#b8b8b8" stroke-width="1.2"/></svg>
<div class="t" style="left:945.6px;top:859.4px;font-size:13px;color:#111;font-weight:normal;letter-spacing:0.929px;">Ins</div>
<div class="a" style="left:987.5px;top:857px;width:1px;height:18px;background:#c0c0c0;"></div>
<div class="t" style="left:997.4px;top:859.4px;font-size:13px;color:#111;font-weight:normal;letter-spacing:0.241px;">AUTO</div>
<div class="a" style="left:1055.5px;top:865px;width:6.5px;height:1.1px;background:#555;"></div>
<div class="a" style="left:1070px;top:865px;width:109px;height:1px;background:#cfcfcf;"></div>
<div class="a" style="left:1123px;top:859px;width:1px;height:12px;background:#999;"></div>
<svg class="a" style="left:1121.7px;top:859px;" width="12" height="12" viewBox="0 0 12 12"><circle cx="6" cy="6" r="5" fill="#fff" stroke="#777" stroke-width="1"/></svg>
<svg class="a" style="left:1184.5px;top:861px;" width="8" height="8" viewBox="0 0 8 8"><path d="M4 0.5 V7.5 M0.5 4 H7.5" stroke="#555" stroke-width="1.1"/></svg>
<div class="t" style="left:1213.1px;top:859.5px;font-size:13px;color:#111;font-weight:normal;letter-spacing:0.117px;">125%</div>
<div class="t" style="left:1261.7px;top:854.84px;font-size:12px;color:#555;font-weight:normal;transform:translateX(-50%);">&#187;</div>
</body></html>
